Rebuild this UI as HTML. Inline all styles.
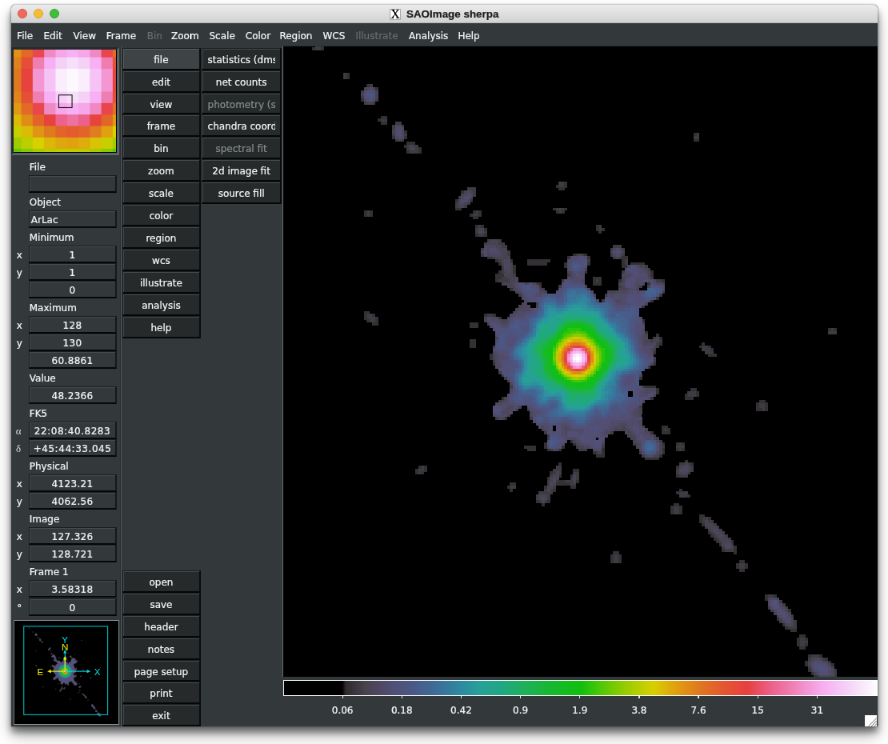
<!DOCTYPE html>
<html lang="en"><head><meta charset="utf-8"><title>SAOImage sherpa</title>
<style>
html,body{margin:0;padding:0;background:#fff;}
body{width:888px;height:744px;overflow:hidden;position:relative;}
#s{position:absolute;left:0;top:0;width:1110px;height:930px;transform:scale(0.8);transform-origin:0 0;will-change:transform;
 font-family:"DejaVu Sans","Liberation Sans",sans-serif;font-size:12px;color:#f4f4f4;-webkit-text-stroke:0.22px currentColor;}
#s div,#s span,#s svg{position:absolute;box-sizing:border-box;}
.win{background:#33393b;border-radius:5px 5px 0 0;box-shadow:0 7px 9px rgba(0,0,0,.45),0 11px 20px rgba(0,0,0,.33),0 0 2.5px rgba(0,0,0,.5);}
.tb{background:linear-gradient(#ececec,#d2d2d2);border-radius:5px 5px 0 0;border-bottom:1px solid #b4b4b4;}
.tl{border-radius:50%;width:12px;height:12px;}
.title{font-family:"Liberation Sans",sans-serif;font-weight:bold;font-size:13.4px;color:#1c1c1c;white-space:nowrap;line-height:16px;}
.xi{background:#fff;border:1px solid #a9a9a9;font-family:"Liberation Serif",serif;font-size:16px;line-height:12.5px;color:#000;text-align:center;overflow:hidden;}
.mi{white-space:nowrap;line-height:16px;}
.dis{color:#676d6f;}
.bt{background:#262a2b;border-top:1px solid #1b1e1f;border-left:1px solid #1b1e1f;border-bottom:2px solid #060707;border-right:2px solid #0b0c0d;box-shadow:inset 1px 1px 0 #454b4d;overflow:hidden;}
.bt.act{background:#3e4446;box-shadow:inset 1px 1px 0 #565d60;}
.bt span{left:0;right:0;top:0;bottom:0;text-align:center;white-space:nowrap;line-height:28.5px;}
.bt span.clip{left:6.2px;right:6.1px;text-align:left;overflow:hidden;}
.bt.d span{color:#858b8d;}
.en{background:#33393b;border-top:1px solid #1b1e1f;border-left:1px solid #1b1e1f;border-bottom:2px solid #070808;border-right:2px solid #15181a;box-shadow:inset 1px 1px 0 #474d4f;text-align:center;white-space:nowrap;line-height:23.5px;overflow:hidden;}
.lb{white-space:nowrap;line-height:16px;}
.cl{white-space:nowrap;line-height:14px;text-align:center;width:60px;}
</style></head>
<body><div id="s">
<div class="win" style="left:13.62px;top:5.5px;width:1083.38px;height:902.25px"></div>
<div class="tb" style="left:13.62px;top:5.5px;width:1083.38px;height:23.25px"></div>
<div class="tl" style="left:21.88px;top:10.88px;background:#ee6a5e;border:1px solid #d9564b"></div>
<div class="tl" style="left:42px;top:10.88px;background:#f5be32;border:1px solid #dca52b"></div>
<div class="tl" style="left:62px;top:10.88px;background:#3ebe3c;border:1px solid #32a532"></div>
<div class="xi" style="left:486.75px;top:10.5px;width:14.5px;height:14.25px">X</div>
<div class="title" style="left:508px;top:9.5px">SAOImage sherpa</div>
<div style="left:14.5px;top:28.75px;width:1082px;height:879px;background:#33393b"></div>
<div class="mi" style="left:21.12px;top:36.62px">File</div><div class="mi" style="left:54.5px;top:36.62px">Edit</div><div class="mi" style="left:91.5px;top:36.62px">View</div><div class="mi" style="left:132.75px;top:36.62px">Frame</div><div class="mi dis" style="left:183.75px;top:36.62px">Bin</div><div class="mi" style="left:214px;top:36.62px">Zoom</div><div class="mi" style="left:261.5px;top:36.62px">Scale</div><div class="mi" style="left:306.75px;top:36.62px">Color</div><div class="mi" style="left:349.38px;top:36.62px">Region</div><div class="mi" style="left:403.5px;top:36.62px">WCS</div><div class="mi dis" style="left:444.38px;top:36.62px">Illustrate</div><div class="mi" style="left:510.88px;top:36.62px">Analysis</div><div class="mi" style="left:572.38px;top:36.62px">Help</div>
<div style="left:14.06px;top:58.88px;width:134.56px;height:134.88px;background:#000;border:3.4px solid;border-color:#272b2d #5c6365 #5c6365 #272b2d"></div>
<svg style="left:17.44px;top:62.38px" width="127.88" height="127.87" viewBox="13.95 49.9 102.3 102.3"><rect x="13.95" y="49.9" width="8.25" height="8.3" fill="#e09116"/><rect x="21.6" y="49.9" width="12.03" height="8.3" fill="#e26729"/><rect x="33.03" y="49.9" width="12.03" height="8.3" fill="#e9464d"/><rect x="44.46" y="49.9" width="12.03" height="8.3" fill="#f08ac2"/><rect x="55.89" y="49.9" width="12.03" height="8.3" fill="#f6a7e9"/><rect x="67.32" y="49.9" width="12.03" height="8.3" fill="#f8b0f4"/><rect x="78.75" y="49.9" width="12.03" height="8.3" fill="#f6a7e9"/><rect x="90.18" y="49.9" width="12.03" height="8.3" fill="#f089c2"/><rect x="101.61" y="49.9" width="12.03" height="8.3" fill="#e9454c"/><rect x="113.04" y="49.9" width="3.81" height="8.3" fill="#e26c26"/><rect x="13.95" y="57.6" width="8.25" height="12.05" fill="#e0811d"/><rect x="21.6" y="57.6" width="12.03" height="12.05" fill="#e54f36"/><rect x="33.03" y="57.6" width="12.03" height="12.05" fill="#ef7eb2"/><rect x="44.46" y="57.6" width="12.03" height="12.05" fill="#f8b0f4"/><rect x="55.89" y="57.6" width="12.03" height="12.05" fill="#f5d0f7"/><rect x="67.32" y="57.6" width="12.03" height="12.05" fill="#f6e0f9"/><rect x="78.75" y="57.6" width="12.03" height="12.05" fill="#f5d0f7"/><rect x="90.18" y="57.6" width="12.03" height="12.05" fill="#f8b0f4"/><rect x="101.61" y="57.6" width="12.03" height="12.05" fill="#ef7db1"/><rect x="113.04" y="57.6" width="3.81" height="12.05" fill="#e54f36"/><rect x="13.95" y="69.05" width="8.25" height="12.05" fill="#e07820"/><rect x="21.6" y="69.05" width="12.03" height="12.05" fill="#e7433e"/><rect x="33.03" y="69.05" width="12.03" height="12.05" fill="#f397d3"/><rect x="44.46" y="69.05" width="12.03" height="12.05" fill="#f6c3f6"/><rect x="55.89" y="69.05" width="12.03" height="12.05" fill="#faeefc"/><rect x="67.32" y="69.05" width="12.03" height="12.05" fill="#fdf8fe"/><rect x="78.75" y="69.05" width="12.03" height="12.05" fill="#faedfc"/><rect x="90.18" y="69.05" width="12.03" height="12.05" fill="#f6c3f6"/><rect x="101.61" y="69.05" width="12.03" height="12.05" fill="#f396d2"/><rect x="113.04" y="69.05" width="3.81" height="12.05" fill="#e7443e"/><rect x="13.95" y="80.5" width="8.25" height="12.05" fill="#e07920"/><rect x="21.6" y="80.5" width="12.03" height="12.05" fill="#e7433e"/><rect x="33.03" y="80.5" width="12.03" height="12.05" fill="#f397d3"/><rect x="44.46" y="80.5" width="12.03" height="12.05" fill="#f6c3f6"/><rect x="55.89" y="80.5" width="12.03" height="12.05" fill="#faeefc"/><rect x="67.32" y="80.5" width="12.03" height="12.05" fill="#fdf8fe"/><rect x="78.75" y="80.5" width="12.03" height="12.05" fill="#faedfc"/><rect x="90.18" y="80.5" width="12.03" height="12.05" fill="#f6c3f6"/><rect x="101.61" y="80.5" width="12.03" height="12.05" fill="#f396d2"/><rect x="113.04" y="80.5" width="3.81" height="12.05" fill="#e7443e"/><rect x="13.95" y="91.95" width="8.25" height="12.05" fill="#e0841b"/><rect x="21.6" y="91.95" width="12.03" height="12.05" fill="#e54f36"/><rect x="33.03" y="91.95" width="12.03" height="12.05" fill="#ef7eb2"/><rect x="44.46" y="91.95" width="12.03" height="12.05" fill="#f8b0f4"/><rect x="55.89" y="91.95" width="12.03" height="12.05" fill="#f5d0f7"/><rect x="67.32" y="91.95" width="12.03" height="12.05" fill="#f6e0f9"/><rect x="78.75" y="91.95" width="12.03" height="12.05" fill="#f5d0f7"/><rect x="90.18" y="91.95" width="12.03" height="12.05" fill="#f8b0f4"/><rect x="101.61" y="91.95" width="12.03" height="12.05" fill="#ef7db1"/><rect x="113.04" y="91.95" width="3.81" height="12.05" fill="#e54f36"/><rect x="13.95" y="103.4" width="8.25" height="12.05" fill="#e09913"/><rect x="21.6" y="103.4" width="12.03" height="12.05" fill="#e26928"/><rect x="33.03" y="103.4" width="12.03" height="12.05" fill="#e9464d"/><rect x="44.46" y="103.4" width="12.03" height="12.05" fill="#f08ac2"/><rect x="55.89" y="103.4" width="12.03" height="12.05" fill="#f6a7e9"/><rect x="67.32" y="103.4" width="12.03" height="12.05" fill="#f8b0f4"/><rect x="78.75" y="103.4" width="12.03" height="12.05" fill="#f6a7e9"/><rect x="90.18" y="103.4" width="12.03" height="12.05" fill="#f089c2"/><rect x="101.61" y="103.4" width="12.03" height="12.05" fill="#e9454c"/><rect x="113.04" y="103.4" width="3.81" height="12.05" fill="#e16e25"/><rect x="13.95" y="114.85" width="8.25" height="12.05" fill="#dcba07"/><rect x="21.6" y="114.85" width="12.03" height="12.05" fill="#e08d17"/><rect x="33.03" y="114.85" width="12.03" height="12.05" fill="#e3632b"/><rect x="44.46" y="114.85" width="12.03" height="12.05" fill="#e7433e"/><rect x="55.89" y="114.85" width="12.03" height="12.05" fill="#ec628a"/><rect x="67.32" y="114.85" width="12.03" height="12.05" fill="#ee72a1"/><rect x="78.75" y="114.85" width="12.03" height="12.05" fill="#ec618a"/><rect x="90.18" y="114.85" width="12.03" height="12.05" fill="#e7443e"/><rect x="101.61" y="114.85" width="12.03" height="12.05" fill="#e2652a"/><rect x="113.04" y="114.85" width="3.81" height="12.05" fill="#e09a12"/><rect x="13.95" y="126.3" width="8.25" height="12.05" fill="#c7cf00"/><rect x="21.6" y="126.3" width="12.03" height="12.05" fill="#dcbb07"/><rect x="33.03" y="126.3" width="12.03" height="12.05" fill="#e09614"/><rect x="44.46" y="126.3" width="12.03" height="12.05" fill="#e07a1f"/><rect x="55.89" y="126.3" width="12.03" height="12.05" fill="#e3642a"/><rect x="67.32" y="126.3" width="12.03" height="12.05" fill="#e45b2e"/><rect x="78.75" y="126.3" width="12.03" height="12.05" fill="#e2642a"/><rect x="90.18" y="126.3" width="12.03" height="12.05" fill="#e07d1e"/><rect x="101.61" y="126.3" width="12.03" height="12.05" fill="#e0a010"/><rect x="113.04" y="126.3" width="3.81" height="12.05" fill="#d6d000"/><rect x="13.95" y="137.75" width="8.25" height="12.05" fill="#9ecc00"/><rect x="21.6" y="137.75" width="12.03" height="12.05" fill="#bdce00"/><rect x="33.03" y="137.75" width="12.03" height="12.05" fill="#d8d000"/><rect x="44.46" y="137.75" width="12.03" height="12.05" fill="#dcb708"/><rect x="55.89" y="137.75" width="12.03" height="12.05" fill="#dfa70e"/><rect x="67.32" y="137.75" width="12.03" height="12.05" fill="#e0a30f"/><rect x="78.75" y="137.75" width="12.03" height="12.05" fill="#deac0c"/><rect x="90.18" y="137.75" width="12.03" height="12.05" fill="#dac205"/><rect x="101.61" y="137.75" width="12.03" height="12.05" fill="#c7cf00"/><rect x="113.04" y="137.75" width="3.81" height="12.05" fill="#a3cd00"/><rect x="13.95" y="149.2" width="8.25" height="3.6" fill="#5fc906"/><rect x="21.6" y="149.2" width="12.03" height="3.6" fill="#87cb02"/><rect x="33.03" y="149.2" width="12.03" height="3.6" fill="#a3cd00"/><rect x="44.46" y="149.2" width="12.03" height="3.6" fill="#b4ce00"/><rect x="55.89" y="149.2" width="12.03" height="3.6" fill="#bece00"/><rect x="67.32" y="149.2" width="12.03" height="3.6" fill="#bfce00"/><rect x="78.75" y="149.2" width="12.03" height="3.6" fill="#b8ce00"/><rect x="90.18" y="149.2" width="12.03" height="3.6" fill="#a7cd00"/><rect x="101.61" y="149.2" width="12.03" height="3.6" fill="#89cb02"/><rect x="113.04" y="149.2" width="3.81" height="3.6" fill="#5bc907"/><rect x="59.1" y="95.3" width="13.3" height="12.6" fill="none" stroke="#1c1c1c" stroke-width="0.9"/></svg>
<div class="lb" style="left:36.75px;top:201.19px">File</div>
<div class="en" style="left:35.75px;top:219.2px;width:110.62px;height:22.01px;letter-spacing:0.35px;"></div>
<div class="lb" style="left:36.75px;top:245.21px">Object</div>
<div class="en" style="left:35.75px;top:263.22px;width:110.62px;height:22.01px;text-align:left;padding-left:2px;">ArLac</div>
<div class="lb" style="left:36.75px;top:289.24px">Minimum</div>
<div class="lb" style="left:15.62px;top:311.25px;width:17.5px;text-align:center;">x</div>
<div class="en" style="left:35.75px;top:307.25px;width:110.62px;height:22.01px;letter-spacing:0.35px;">1</div>
<div class="lb" style="left:15.62px;top:333.26px;width:17.5px;text-align:center;">y</div>
<div class="en" style="left:35.75px;top:329.26px;width:110.62px;height:22.01px;letter-spacing:0.35px;">1</div>
<div class="en" style="left:35.75px;top:351.27px;width:110.62px;height:22.01px;letter-spacing:0.35px;">0</div>
<div class="lb" style="left:36.75px;top:377.29px">Maximum</div>
<div class="lb" style="left:15.62px;top:399.3px;width:17.5px;text-align:center;">x</div>
<div class="en" style="left:35.75px;top:395.3px;width:110.62px;height:22.01px;letter-spacing:0.35px;">128</div>
<div class="lb" style="left:15.62px;top:421.31px;width:17.5px;text-align:center;">y</div>
<div class="en" style="left:35.75px;top:417.31px;width:110.62px;height:22.01px;letter-spacing:0.35px;">130</div>
<div class="en" style="left:35.75px;top:439.32px;width:110.62px;height:22.01px;letter-spacing:0.35px;">60.8861</div>
<div class="lb" style="left:36.75px;top:465.34px">Value</div>
<div class="en" style="left:35.75px;top:483.35px;width:110.62px;height:22.01px;letter-spacing:0.35px;">48.2366</div>
<div class="lb" style="left:36.75px;top:509.36px">FK5</div>
<div class="lb" style="left:15.62px;top:531.38px;width:17.5px;text-align:center;font-family:'Liberation Serif',serif;font-size:13px;color:#dcdcdc;-webkit-text-stroke:0;margin-left:-1.2px;">α</div>
<div class="en" style="left:35.75px;top:527.38px;width:110.62px;height:22.01px;letter-spacing:0.55px;">22:08:40.8283</div>
<div class="lb" style="left:15.62px;top:553.39px;width:17.5px;text-align:center;font-family:'Liberation Serif',serif;font-size:13px;color:#dcdcdc;-webkit-text-stroke:0;margin-left:-1.2px;">δ</div>
<div class="en" style="left:35.75px;top:549.39px;width:110.62px;height:22.01px;letter-spacing:0.55px;">+45:44:33.045</div>
<div class="lb" style="left:36.75px;top:575.4px">Physical</div>
<div class="lb" style="left:15.62px;top:597.41px;width:17.5px;text-align:center;">x</div>
<div class="en" style="left:35.75px;top:593.41px;width:110.62px;height:22.01px;letter-spacing:0.35px;">4123.21</div>
<div class="lb" style="left:15.62px;top:619.42px;width:17.5px;text-align:center;">y</div>
<div class="en" style="left:35.75px;top:615.42px;width:110.62px;height:22.01px;letter-spacing:0.35px;">4062.56</div>
<div class="lb" style="left:36.75px;top:641.44px">Image</div>
<div class="lb" style="left:15.62px;top:663.45px;width:17.5px;text-align:center;">x</div>
<div class="en" style="left:35.75px;top:659.45px;width:110.62px;height:22.01px;letter-spacing:0.35px;">127.326</div>
<div class="lb" style="left:15.62px;top:685.46px;width:17.5px;text-align:center;">y</div>
<div class="en" style="left:35.75px;top:681.46px;width:110.62px;height:22.01px;letter-spacing:0.35px;">128.721</div>
<div class="lb" style="left:36.75px;top:707.48px">Frame 1</div>
<div class="lb" style="left:15.62px;top:729.49px;width:17.5px;text-align:center;">x</div>
<div class="en" style="left:35.75px;top:725.49px;width:110.62px;height:22.01px;letter-spacing:0.35px;">3.58318</div>
<div class="lb" style="left:15.62px;top:751.5px;width:17.5px;text-align:center;">°</div>
<div class="en" style="left:35.75px;top:747.5px;width:110.62px;height:22.01px;letter-spacing:0.35px;">0</div>
<div style="left:17.12px;top:775px;width:131.5px;height:131.12px;background:#000;border:1.5px solid;border-color:#8b9193 #7b8284 #90979a #6d7476"></div>
<svg style="left:18.62px;top:777px" width="128.12" height="127.25" viewBox="14.9 621.6 102.5 101.8"><defs><radialGradient id="pg"><stop offset="0" stop-color="#fff"/><stop offset=".12" stop-color="#f088c0"/><stop offset=".2" stop-color="#e84040"/><stop offset=".3" stop-color="#d8d000"/><stop offset=".48" stop-color="#10c010"/><stop offset=".7" stop-color="#28a09a"/><stop offset="1" stop-color="#4a5a8a"/></radialGradient></defs><polygon points="64.67,656.82 66.02,656.82 66.47,657.16 66.36,657.94 65.91,658.85 65.68,659.97 65.46,660.98 66.25,661.55 67.04,662.11 67.37,663.23 68.5,663.46 68.72,662.22 69.17,661.77 70.41,662 70.7,660.53 71.15,658.96 72.1,658.17 74.13,658.17 75.03,658.85 75.14,659.86 74.69,660.6 75.36,660.31 76.38,660.2 77.05,661.1 76.94,662 75.93,662.9 74.58,663.57 73.34,664.47 73.11,665.03 73.79,665.71 74.13,667.17 74.4,668.52 75.21,668.97 75.7,667.85 76.38,668.07 76.49,669.2 75.75,670.1 75.25,670.77 75.36,671.31 75.7,671.31 75.48,672.21 74.35,672.66 73.56,673.56 73.34,674.46 73.22,675.14 74.13,675.37 75.48,675.25 76.15,675.48 76.04,676.38 75.03,676.94 73.9,677.39 73.45,677.84 73.56,678.97 73.67,680.32 74.13,680.99 75.25,681.89 76.38,682.79 76.83,683.69 76.6,684.82 75.7,685.38 74.58,685.49 73.67,684.82 73,683.69 72.32,682.79 71.65,681.89 70.97,681.44 70.07,681.44 69.17,681.89 68.5,682.57 68.27,683.92 68.39,685.04 67.82,685.61 67.26,685.04 67.04,683.92 66.25,683.92 65.35,684.37 64.67,683.92 64.67,683.58 63.68,682.57 63.01,683.02 62.56,683.92 61.66,684.37 60.64,684.14 60.19,683.58 60.42,682.79 60.98,682.34 60.53,681.89 59.63,681.22 58.84,680.54 58.28,679.64 57.94,678.52 57.72,677.73 56.93,677.84 56.25,678.52 55.13,679.3 54.23,679.98 53.44,679.98 52.99,679.19 52.99,678.29 53.55,677.39 54.68,676.72 55.35,675.93 55.69,675.03 54.9,674.35 54,673.56 53.33,672.44 52.65,671.31 52.65,671.31 52.99,670.1 53.55,668.52 53.22,667.62 52.43,666.72 51.53,666.05 51.42,665.37 52.09,665.03 53.1,665.26 54.12,665.93 55.13,665.71 55.69,664.81 56.59,664.13 57.38,663.46 56.93,662.78 56.03,662 54.9,661.32 54,660.87 53.1,660.31 52.99,659.86 53.67,659.41 54.23,659.3 54.34,658.62 53.89,657.94 53.1,657.38 51.98,657.27 51.3,657.16 50.97,656.71 51.53,655.92 52.09,654.91 52.77,654.57 53.89,654.68 54.57,655.47 55.13,656.48 55.47,657.49 55.8,658.39 55.92,659.41 56.59,660.53 57.6,660.98 58.51,660.53 59.52,660.76 59.97,661.77 60.53,662.33 61.66,662.22 62.33,661.32 62.56,660.42 63.46,660.2 63.68,659.41 63.12,658.85 63.05,657.94 63.46,657.16 64.67,656.82" fill="#55527a" stroke="#3c3a48" stroke-width=".6"/><circle cx="64.7" cy="671.3" r="7.4" fill="url(#pg)"/><ellipse cx="28.6" cy="627.99" rx="0.7" ry="0.55" fill="#3e3a42" transform="rotate(0 28.6 627.99)"/><ellipse cx="32.37" cy="631.92" rx="0.55" ry="0.55" fill="#3e3a42" transform="rotate(45 32.37 631.92)"/><ellipse cx="35.76" cy="634.61" rx="1.19" ry="1.36" fill="#4d5580" transform="rotate(0 35.76 634.61)"/><ellipse cx="37.64" cy="638.14" rx="0.55" ry="0.55" fill="#3e3a42" transform="rotate(0 37.64 638.14)"/><ellipse cx="39.82" cy="639.78" rx="1.4" ry="0.87" fill="#514d72" transform="rotate(80 39.82 639.78)"/><ellipse cx="41.79" cy="642.01" rx="1.12" ry="0.7" fill="#46414b" transform="rotate(20 41.79 642.01)"/><ellipse cx="49.1" cy="648.99" rx="1.95" ry="0.84" fill="#4e4a65" transform="rotate(-50 49.1 648.99)"/><ellipse cx="35.51" cy="651.08" rx="0.55" ry="0.55" fill="#3e3a42" transform="rotate(0 35.51 651.08)"/><ellipse cx="50.52" cy="651.22" rx="0.55" ry="0.56" fill="#3e3a42" transform="rotate(60 50.52 651.22)"/><ellipse cx="51.22" cy="653.59" rx="0.84" ry="0.77" fill="#4a4554" transform="rotate(45 51.22 653.59)"/><ellipse cx="62.54" cy="647.17" rx="0.55" ry="0.55" fill="#3e3a42" transform="rotate(0 62.54 647.17)"/><ellipse cx="62.3" cy="650.66" rx="0.63" ry="0.55" fill="#3e3a42" transform="rotate(0 62.3 650.66)"/><ellipse cx="81.31" cy="640.41" rx="0.55" ry="0.55" fill="#3e3a42" transform="rotate(0 81.31 640.41)"/><ellipse cx="67.88" cy="653.23" rx="0.55" ry="0.55" fill="#3e3a42" transform="rotate(0 67.88 653.23)"/><ellipse cx="70.3" cy="656.55" rx="1.01" ry="1.01" fill="#504c6e" transform="rotate(0 70.3 656.55)"/><ellipse cx="71.37" cy="657.92" rx="0.55" ry="0.56" fill="#3b373e" transform="rotate(0 71.37 657.92)"/><ellipse cx="35.9" cy="665.73" rx="1.19" ry="0.56" fill="#3e3a42" transform="rotate(35 35.9 665.73)"/><ellipse cx="50.3" cy="666.71" rx="0.55" ry="0.55" fill="#353237" transform="rotate(-35 50.3 666.71)"/><ellipse cx="50.16" cy="669.3" rx="0.55" ry="0.55" fill="#353237" transform="rotate(0 50.16 669.3)"/><ellipse cx="82.85" cy="670.2" rx="1.26" ry="0.55" fill="#3e3a42" transform="rotate(40 82.85 670.2)"/><ellipse cx="80.65" cy="676.38" rx="1.01" ry="0.56" fill="#3e3a42" transform="rotate(-25 80.65 676.38)"/><ellipse cx="100.3" cy="667.62" rx="0.55" ry="0.55" fill="#3e3a42" transform="rotate(0 100.3 667.62)"/><ellipse cx="90.54" cy="678.01" rx="0.77" ry="0.77" fill="#3e3a42" transform="rotate(0 90.54 678.01)"/><ellipse cx="77.09" cy="681.4" rx="0.56" ry="0.55" fill="#373439" transform="rotate(45 77.09 681.4)"/><ellipse cx="79.11" cy="683.65" rx="0.55" ry="0.56" fill="#3e3a42" transform="rotate(0 79.11 683.65)"/><ellipse cx="42.88" cy="686.89" rx="0.63" ry="0.55" fill="#3e3a42" transform="rotate(-30 42.88 686.89)"/><ellipse cx="55.56" cy="689.25" rx="0.55" ry="0.55" fill="#3e3a42" transform="rotate(0 55.56 689.25)"/><ellipse cx="59.89" cy="690.77" rx="0.94" ry="0.91" fill="#4a4554" transform="rotate(0 59.89 690.77)"/><ellipse cx="61.32" cy="688.48" rx="2.65" ry="0.66" fill="#4a4554" transform="rotate(-66 61.32 688.48)"/><ellipse cx="63.14" cy="688.62" rx="0.91" ry="0.55" fill="#3b373e" transform="rotate(-10 63.14 688.62)"/><ellipse cx="64.32" cy="688.06" rx="1.53" ry="0.55" fill="#46414b" transform="rotate(-75 64.32 688.06)"/><ellipse cx="79.65" cy="686.85" rx="1.33" ry="0.98" fill="#4c475d" transform="rotate(-35 79.65 686.85)"/><ellipse cx="79.51" cy="690.29" rx="0.91" ry="0.55" fill="#3e3a42" transform="rotate(20 79.51 690.29)"/><ellipse cx="78.51" cy="692.41" rx="0.66" ry="0.66" fill="#3e3a42" transform="rotate(0 78.51 692.41)"/><ellipse cx="84.28" cy="695.73" rx="3.77" ry="0.77" fill="#4a4554" transform="rotate(45 84.28 695.73)"/><ellipse cx="85.67" cy="697.41" rx="1.12" ry="0.84" fill="#4b4658" transform="rotate(45 85.67 697.41)"/><ellipse cx="87.77" cy="700.24" rx="0.56" ry="0.55" fill="#3e3a42" transform="rotate(0 87.77 700.24)"/><ellipse cx="70.09" cy="699.19" rx="0.66" ry="0.66" fill="#3e3a42" transform="rotate(0 70.09 699.19)"/><ellipse cx="93.21" cy="706.76" rx="3.21" ry="0.98" fill="#514d72" transform="rotate(52 93.21 706.76)"/><ellipse cx="92.23" cy="705.57" rx="1.12" ry="0.98" fill="#50527a" transform="rotate(52 92.23 705.57)"/><ellipse cx="96.15" cy="710.85" rx="0.66" ry="0.66" fill="#3e3a42" transform="rotate(0 96.15 710.85)"/><ellipse cx="98.79" cy="714.57" rx="2.37" ry="1.4" fill="#515078" transform="rotate(35 98.79 714.57)"/><ellipse cx="59.16" cy="657.85" rx="1.67" ry="0.55" fill="#353237" transform="rotate(0 59.16 657.85)"/><ellipse cx="67.55" cy="660.53" rx="0.55" ry="0.55" fill="#3b373e" transform="rotate(0 67.55 660.53)"/><ellipse cx="58.17" cy="683.8" rx="0.7" ry="0.55" fill="#333034" transform="rotate(0 58.17 683.8)"/><circle cx="36.18" cy="634.96" r="0.8" fill="#4c4a60"/><circle cx="38.04" cy="637.33" r="0.6" fill="#4c4a60"/><circle cx="39.9" cy="639.7" r="0.7" fill="#4c4a60"/><circle cx="41.45" cy="641.67" r="0.6" fill="#4c4a60"/><circle cx="91.98" cy="706.06" r="0.9" fill="#4c4a60"/><circle cx="93.84" cy="708.43" r="0.7" fill="#4c4a60"/><circle cx="96.01" cy="711.19" r="1.1" fill="#4c4a60"/><circle cx="97.56" cy="713.17" r="0.8" fill="#4c4a60"/><rect x="23.5" y="626.3" width="83.9" height="88.4" fill="none" stroke="#00b9b9" stroke-width=".9"/><g stroke-width=".85" fill="none"><path d="M64.7 671.3V651" stroke="#00e0e0"/><path d="M64.7 671.3H88.6" stroke="#00e0e0"/><path d="M64.7 671.3V657.6" stroke="#f0f000"/><path d="M64.7 671.3H48.5" stroke="#f0f000"/></g><path d="M64.7 649.6l-1.7 3.6h3.4z" fill="#00e0e0"/><path d="M90.2 671.3l-3.6-1.7v3.4z" fill="#00e0e0"/><path d="M64.7 656l-1.7 3.8h3.4z" fill="#f0f000"/><path d="M47 671.3l3.8-1.7v3.4z" fill="#f0f000"/><text x="64.7" y="643.2" fill="#00e0e0" font-family="Liberation Sans,sans-serif" font-size="9.3" text-anchor="middle">Y</text><text x="64.7" y="650.6" fill="#f0f000" font-family="Liberation Sans,sans-serif" font-size="9.3" text-anchor="middle">N</text><text x="40" y="675.2" fill="#f0f000" font-family="Liberation Sans,sans-serif" font-size="9.3" text-anchor="middle">E</text><text x="97" y="675.2" fill="#00e0e0" font-family="Liberation Sans,sans-serif" font-size="9.3" text-anchor="middle">X</text></svg>
<div style="left:149.88px;top:58.12px;width:1px;height:849.62px;background:#292d2f"></div>
<div style="left:151px;top:58.12px;width:1px;height:849.62px;background:#50575a"></div>
<div class="bt act" style="left:152.88px;top:59.75px;width:98.13px;height:27.91px"><span>file</span></div>
<div class="bt" style="left:152.88px;top:87.66px;width:98.13px;height:27.91px"><span>edit</span></div>
<div class="bt" style="left:152.88px;top:115.57px;width:98.13px;height:27.91px"><span>view</span></div>
<div class="bt" style="left:152.88px;top:143.49px;width:98.13px;height:27.91px"><span>frame</span></div>
<div class="bt" style="left:152.88px;top:171.4px;width:98.13px;height:27.91px"><span>bin</span></div>
<div class="bt" style="left:152.88px;top:199.31px;width:98.13px;height:27.91px"><span>zoom</span></div>
<div class="bt" style="left:152.88px;top:227.22px;width:98.13px;height:27.91px"><span>scale</span></div>
<div class="bt" style="left:152.88px;top:255.14px;width:98.13px;height:27.91px"><span>color</span></div>
<div class="bt" style="left:152.88px;top:283.05px;width:98.13px;height:27.91px"><span>region</span></div>
<div class="bt" style="left:152.88px;top:310.96px;width:98.13px;height:27.91px"><span>wcs</span></div>
<div class="bt" style="left:152.88px;top:338.87px;width:98.13px;height:27.91px"><span>illustrate</span></div>
<div class="bt" style="left:152.88px;top:366.79px;width:98.13px;height:27.91px"><span>analysis</span></div>
<div class="bt" style="left:152.88px;top:394.7px;width:98.13px;height:27.91px"><span>help</span></div>
<div class="bt" style="left:252.38px;top:59.75px;width:99.5px;height:27.91px"><span class="clip">statistics (dmstat)</span></div>
<div class="bt" style="left:252.38px;top:87.66px;width:99.5px;height:27.91px"><span>net counts</span></div>
<div class="bt d" style="left:252.38px;top:115.57px;width:99.5px;height:27.91px"><span class="clip">photometry (srcflux)</span></div>
<div class="bt" style="left:252.38px;top:143.49px;width:99.5px;height:27.91px"><span class="clip">chandra coordinates</span></div>
<div class="bt d" style="left:252.38px;top:171.4px;width:99.5px;height:27.91px"><span>spectral fit</span></div>
<div class="bt" style="left:252.38px;top:199.31px;width:99.5px;height:27.91px"><span>2d image fit</span></div>
<div class="bt" style="left:252.38px;top:227.22px;width:99.5px;height:27.91px"><span>source fill</span></div>
<div class="bt" style="left:152.88px;top:712.88px;width:98.13px;height:27.91px"><span>open</span></div>
<div class="bt" style="left:152.88px;top:740.79px;width:98.13px;height:27.91px"><span>save</span></div>
<div class="bt" style="left:152.88px;top:768.7px;width:98.13px;height:27.91px"><span>header</span></div>
<div class="bt" style="left:152.88px;top:796.61px;width:98.13px;height:27.91px"><span>notes</span></div>
<div class="bt" style="left:152.88px;top:824.52px;width:98.13px;height:27.91px"><span>page setup</span></div>
<div class="bt" style="left:152.88px;top:852.44px;width:98.13px;height:27.91px"><span>print</span></div>
<div class="bt" style="left:152.88px;top:880.35px;width:98.13px;height:27.91px"><span>exit</span></div>
<div style="left:353px;top:57px;width:743.5px;height:788.75px;background:#000;border-left:1px solid #666d6f;border-top:1px solid #2b3032"></div>
<svg style="left:354px;top:57.75px" width="742.5" height="788" viewBox="283.2 46.2 594 630.4" shape-rendering="crispEdges"><path fill="#3f3b42" d="M314.92 46.2h6.03v0.98h-6.03zM314.92 46.88h6.03v3.17h-6.03zM343.58 72.68h3.17v3.17h-3.17zM343.58 75.55h3.17v3.17h-3.17zM369.38 84.15h3.17v3.17h-3.17zM360.78 89.88h3.17v3.17h-3.17zM360.78 95.62h3.17v3.17h-3.17zM375.11 98.48h3.17v3.17h-3.17zM363.65 101.35h3.17v3.17h-3.17zM372.25 101.35h3.17v3.17h-3.17zM380.84 118.55h6.03v3.17h-6.03zM395.18 121.41h6.03v3.17h-6.03zM392.31 124.28h3.17v3.17h-3.17zM400.91 124.28h3.17v3.17h-3.17zM392.31 127.15h3.17v3.17h-3.17zM392.31 132.88h3.17v3.17h-3.17zM403.78 132.88h3.17v3.17h-3.17zM696.16 132.88h3.17v3.17h-3.17zM693.29 135.75h6.03v3.17h-6.03zM395.18 138.61h3.17v3.17h-3.17zM400.91 138.61h3.17v3.17h-3.17zM406.64 144.35h3.17v3.17h-3.17zM412.38 144.35h6.03v3.17h-6.03zM406.64 147.21h3.17v3.17h-3.17zM415.24 147.21h3.17v3.17h-3.17zM409.51 150.08h8.9v3.17h-8.9zM558.57 181.61h6.03v3.17h-6.03zM558.57 184.48h6.03v3.17h-6.03zM466.84 187.34h8.9v3.17h-8.9zM472.57 190.21h3.17v3.17h-3.17zM472.57 193.08h3.17v3.17h-3.17zM458.24 195.94h3.17v3.17h-3.17zM455.37 201.68h3.17v3.17h-3.17zM466.84 201.68h3.17v3.17h-3.17zM455.37 204.54h3.17v3.17h-3.17zM463.97 204.54h3.17v3.17h-3.17zM555.7 207.41h8.9v3.17h-8.9zM366.51 210.28h3.17v3.17h-3.17zM475.44 210.28h3.17v3.17h-3.17zM558.57 210.28h3.17v3.17h-3.17zM366.51 213.14h3.17v3.17h-3.17zM472.57 213.14h6.03v3.17h-6.03zM478.31 224.61h3.17v3.17h-3.17zM598.7 224.61h3.17v3.17h-3.17zM475.44 227.47h3.17v3.17h-3.17zM598.7 227.47h3.17v3.17h-3.17zM475.44 230.34h3.17v3.17h-3.17zM484.04 230.34h3.17v3.17h-3.17zM478.31 233.21h6.03v3.17h-6.03zM486.91 238.94h3.17v3.17h-3.17zM498.37 238.94h3.17v3.17h-3.17zM484.04 241.81h3.17v3.17h-3.17zM498.37 241.81h6.03v3.17h-6.03zM501.24 244.67h6.03v3.17h-6.03zM613.03 244.67h8.9v3.17h-8.9zM481.17 247.54h3.17v3.17h-3.17zM610.16 247.54h3.17v3.17h-3.17zM621.63 247.54h3.17v3.17h-3.17zM506.97 250.41h3.17v3.17h-3.17zM481.17 253.27h3.17v3.17h-3.17zM506.97 253.27h3.17v3.17h-3.17zM575.77 253.27h3.17v3.17h-3.17zM581.5 253.27h3.17v3.17h-3.17zM610.16 253.27h3.17v3.17h-3.17zM621.63 253.27h3.17v3.17h-3.17zM492.64 256.14h3.17v3.17h-3.17zM613.03 256.14h3.17v3.17h-3.17zM618.76 256.14h3.17v3.17h-3.17zM498.37 259.01h3.17v3.17h-3.17zM587.23 259.01h3.17v3.17h-3.17zM624.5 259.01h3.17v3.17h-3.17zM624.5 261.87h3.17v3.17h-3.17zM501.24 264.74h3.17v3.17h-3.17zM644.56 264.74h3.17v3.17h-3.17zM501.24 267.61h3.17v3.17h-3.17zM647.43 267.61h3.17v3.17h-3.17zM501.24 270.47h3.17v3.17h-3.17zM621.63 270.47h3.17v3.17h-3.17zM512.7 273.34h3.17v3.17h-3.17zM567.17 273.34h3.17v3.17h-3.17zM501.24 276.2h6.03v3.17h-6.03zM650.3 276.2h3.17v3.17h-3.17zM498.37 279.07h11.77v3.17h-11.77zM561.43 279.07h3.17v3.17h-3.17zM595.83 279.07h3.17v3.17h-3.17zM656.03 279.07h6.03v3.17h-6.03zM535.64 281.94h3.17v3.17h-3.17zM538.5 284.8h3.17v3.17h-3.17zM558.57 284.8h3.17v3.17h-3.17zM618.76 284.8h3.17v3.17h-3.17zM638.83 284.8h3.17v3.17h-3.17zM541.37 287.67h3.17v3.17h-3.17zM661.76 290.54h3.17v3.17h-3.17zM518.44 293.4h3.17v3.17h-3.17zM604.43 293.4h3.17v3.17h-3.17zM658.9 293.4h3.17v3.17h-3.17zM601.57 299.14h3.17v3.17h-3.17zM535.64 302h3.17v3.17h-3.17zM366.51 313.47h6.03v3.17h-6.03zM486.91 313.47h6.03v3.17h-6.03zM366.51 316.34h8.9v3.17h-8.9zM369.38 319.2h6.03v3.17h-6.03zM830.89 327.8h3.17v3.17h-3.17zM828.02 330.67h8.9v3.17h-8.9zM653.16 336.4h3.17v3.17h-3.17zM650.3 339.27h3.17v3.17h-3.17zM658.9 339.27h3.17v3.17h-3.17zM656.03 342.13h3.17v3.17h-3.17zM492.64 345h3.17v3.17h-3.17zM656.03 345h3.17v3.17h-3.17zM701.89 345h6.03v3.17h-6.03zM653.16 347.87h3.17v3.17h-3.17zM701.89 347.87h8.9v3.17h-8.9zM704.76 350.73h8.9v3.17h-8.9zM653.16 356.47h3.17v3.17h-3.17zM492.64 359.33h3.17v3.17h-3.17zM653.16 359.33h3.17v3.17h-3.17zM647.43 365.07h3.17v3.17h-3.17zM498.37 370.8h3.17v3.17h-3.17zM504.1 376.53h3.17v3.17h-3.17zM506.97 379.4h3.17v3.17h-3.17zM509.84 385.13h3.17v3.17h-3.17zM641.7 385.13h3.17v3.17h-3.17zM687.56 390.86h8.9v3.17h-8.9zM687.56 393.73h8.9v3.17h-8.9zM498.37 399.46h3.17v3.17h-3.17zM759.22 402.33h6.03v3.17h-6.03zM638.83 405.2h3.17v3.17h-3.17zM759.22 405.2h6.03v3.17h-6.03zM515.57 408.06h3.17v3.17h-3.17zM527.04 408.06h3.17v3.17h-3.17zM762.09 408.06h3.17v3.17h-3.17zM495.5 416.66h3.17v3.17h-3.17zM529.9 416.66h3.17v3.17h-3.17zM664.63 428.13h3.17v3.17h-3.17zM544.24 431h3.17v3.17h-3.17zM610.16 431h3.17v3.17h-3.17zM547.1 433.86h3.17v3.17h-3.17zM653.16 433.86h3.17v3.17h-3.17zM547.1 436.73h3.17v3.17h-3.17zM656.03 436.73h3.17v3.17h-3.17zM658.9 439.6h3.17v3.17h-3.17zM633.1 442.46h3.17v3.17h-3.17zM678.96 442.46h3.17v3.17h-3.17zM575.77 445.33h3.17v3.17h-3.17zM601.57 445.33h3.17v3.17h-3.17zM661.76 445.33h3.17v3.17h-3.17zM676.09 445.33h8.9v3.17h-8.9zM549.97 448.19h3.17v3.17h-3.17zM578.63 448.19h8.9v3.17h-8.9zM678.96 448.19h3.17v3.17h-3.17zM595.83 451.06h3.17v3.17h-3.17zM638.83 451.06h3.17v3.17h-3.17zM641.7 453.93h3.17v3.17h-3.17zM678.96 462.53h6.03v3.17h-6.03zM687.56 462.53h3.17v3.17h-3.17zM420.98 465.39h3.17v3.17h-3.17zM555.7 465.39h6.03v3.17h-6.03zM690.43 465.39h3.17v3.17h-3.17zM418.11 468.26h6.03v3.17h-6.03zM552.83 468.26h8.9v3.17h-8.9zM676.09 468.26h3.17v3.17h-3.17zM690.43 468.26h3.17v3.17h-3.17zM418.11 471.13h3.17v3.17h-3.17zM552.83 471.13h3.17v3.17h-3.17zM558.57 471.13h3.17v3.17h-3.17zM572.9 471.13h6.03v3.17h-6.03zM676.09 471.13h3.17v3.17h-3.17zM687.56 471.13h3.17v3.17h-3.17zM549.97 473.99h3.17v3.17h-3.17zM575.77 473.99h3.17v3.17h-3.17zM678.96 473.99h8.9v3.17h-8.9zM570.03 476.86h3.17v3.17h-3.17zM575.77 476.86h3.17v3.17h-3.17zM547.1 479.73h3.17v3.17h-3.17zM555.7 479.73h3.17v3.17h-3.17zM564.3 479.73h8.9v3.17h-8.9zM547.1 482.59h3.17v3.17h-3.17zM570.03 482.59h6.03v3.17h-6.03zM509.84 485.46h6.03v3.17h-6.03zM552.83 485.46h3.17v3.17h-3.17zM544.24 488.33h3.17v3.17h-3.17zM549.97 488.33h3.17v3.17h-3.17zM538.5 491.19h14.63v3.17h-14.63zM678.96 491.19h8.9v3.17h-8.9zM535.64 494.06h3.17v3.17h-3.17zM547.1 494.06h3.17v3.17h-3.17zM678.96 494.06h8.9v3.17h-8.9zM535.64 496.93h3.17v3.17h-3.17zM547.1 496.93h3.17v3.17h-3.17zM538.5 499.79h3.17v3.17h-3.17zM544.24 499.79h3.17v3.17h-3.17zM673.23 505.52h6.03v3.17h-6.03zM673.23 508.39h6.03v3.17h-6.03zM673.23 511.26h6.03v3.17h-6.03zM701.89 516.99h6.03v3.17h-6.03zM701.89 519.86h3.17v3.17h-3.17zM707.63 519.86h6.03v3.17h-6.03zM713.36 522.72h3.17v3.17h-3.17zM704.76 525.59h3.17v3.17h-3.17zM716.23 525.59h3.17v3.17h-3.17zM707.63 528.46h3.17v3.17h-3.17zM719.09 528.46h3.17v3.17h-3.17zM710.49 531.32h3.17v3.17h-3.17zM721.96 531.32h3.17v3.17h-3.17zM713.36 534.19h3.17v3.17h-3.17zM724.82 534.19h3.17v3.17h-3.17zM716.23 537.06h3.17v3.17h-3.17zM727.69 537.06h3.17v3.17h-3.17zM719.09 539.92h3.17v3.17h-3.17zM730.56 542.79h3.17v3.17h-3.17zM721.96 545.66h3.17v3.17h-3.17zM724.82 548.52h8.9v3.17h-8.9zM613.03 554.26h6.03v3.17h-6.03zM613.03 557.12h6.03v3.17h-6.03zM613.03 559.99h6.03v3.17h-6.03zM739.16 562.85h6.03v3.17h-6.03zM739.16 565.72h6.03v3.17h-6.03zM767.82 594.39h6.03v3.17h-6.03zM779.29 600.12h3.17v3.17h-3.17zM782.15 602.99h3.17v3.17h-3.17zM767.82 605.85h3.17v3.17h-3.17zM785.02 605.85h3.17v3.17h-3.17zM770.69 608.72h3.17v3.17h-3.17zM790.75 614.45h3.17v3.17h-3.17zM779.29 620.18h3.17v3.17h-3.17zM793.62 620.18h3.17v3.17h-3.17zM793.62 623.05h3.17v3.17h-3.17zM787.89 625.92h8.9v3.17h-8.9zM799.35 637.38h6.03v3.17h-6.03zM799.35 640.25h8.9v3.17h-8.9zM799.35 643.12h6.03v3.17h-6.03zM810.82 654.58h8.9v3.17h-8.9zM807.95 657.45h3.17v3.17h-3.17zM822.29 657.45h3.17v3.17h-3.17zM807.95 666.05h3.17v3.17h-3.17zM833.75 668.92h3.17v3.17h-3.17zM833.75 671.78h3.17v3.17h-3.17zM816.55 674.65h3.17v2.25h-3.17zM833.75 674.65h3.17v2.25h-3.17z"/><path fill="#343135" d="M320.65 46.2h3.17v0.98h-3.17zM312.05 46.88h3.17v3.17h-3.17zM320.65 46.88h3.17v3.17h-3.17zM346.45 72.68h3.17v3.17h-3.17zM346.45 75.55h3.17v3.17h-3.17zM366.51 84.15h3.17v3.17h-3.17zM375.11 87.02h3.17v3.17h-3.17zM360.78 98.48h3.17v3.17h-3.17zM380.84 115.68h6.03v3.17h-6.03zM377.98 118.55h3.17v3.17h-3.17zM380.84 121.41h6.03v3.17h-6.03zM403.78 130.01h3.17v3.17h-3.17zM693.29 132.88h3.17v3.17h-3.17zM392.31 135.75h3.17v3.17h-3.17zM403.78 135.75h3.17v3.17h-3.17zM693.29 138.61h6.03v3.17h-6.03zM406.64 141.48h8.9v3.17h-8.9zM403.78 144.35h3.17v3.17h-3.17zM418.11 147.21h3.17v3.17h-3.17zM406.64 150.08h3.17v3.17h-3.17zM418.11 150.08h3.17v3.17h-3.17zM564.3 181.61h3.17v3.17h-3.17zM555.7 184.48h3.17v3.17h-3.17zM564.3 184.48h3.17v3.17h-3.17zM558.57 187.34h6.03v3.17h-6.03zM461.11 190.21h3.17v3.17h-3.17zM455.37 198.81h3.17v3.17h-3.17zM469.71 198.81h3.17v3.17h-3.17zM455.37 207.41h6.03v3.17h-6.03zM552.83 207.41h3.17v3.17h-3.17zM564.3 207.41h3.17v3.17h-3.17zM363.65 210.28h3.17v3.17h-3.17zM369.38 210.28h3.17v3.17h-3.17zM472.57 210.28h3.17v3.17h-3.17zM478.31 210.28h3.17v3.17h-3.17zM555.7 210.28h3.17v3.17h-3.17zM561.43 210.28h3.17v3.17h-3.17zM363.65 213.14h3.17v3.17h-3.17zM369.38 213.14h3.17v3.17h-3.17zM469.71 213.14h3.17v3.17h-3.17zM478.31 213.14h3.17v3.17h-3.17zM472.57 216.01h6.03v3.17h-6.03zM475.44 224.61h3.17v3.17h-3.17zM481.17 224.61h3.17v3.17h-3.17zM595.83 224.61h3.17v3.17h-3.17zM484.04 227.47h3.17v3.17h-3.17zM595.83 227.47h3.17v3.17h-3.17zM601.57 227.47h3.17v3.17h-3.17zM598.7 230.34h3.17v3.17h-3.17zM475.44 233.21h3.17v3.17h-3.17zM484.04 233.21h3.17v3.17h-3.17zM572.9 253.27h3.17v3.17h-3.17zM584.37 253.27h3.17v3.17h-3.17zM486.91 256.14h6.03v3.17h-6.03zM567.17 256.14h3.17v3.17h-3.17zM587.23 256.14h3.17v3.17h-3.17zM621.63 256.14h6.03v3.17h-6.03zM495.5 259.01h3.17v3.17h-3.17zM509.84 259.01h3.17v3.17h-3.17zM527.04 259.01h23.23v3.17h-23.23zM621.63 259.01h3.17v3.17h-3.17zM498.37 261.87h3.17v3.17h-3.17zM527.04 261.87h20.37v3.17h-20.37zM564.3 261.87h3.17v3.17h-3.17zM587.23 261.87h3.17v3.17h-3.17zM621.63 261.87h3.17v3.17h-3.17zM630.23 261.87h14.63v3.17h-14.63zM512.7 264.74h3.17v3.17h-3.17zM564.3 264.74h3.17v3.17h-3.17zM621.63 264.74h6.03v3.17h-6.03zM512.7 267.61h3.17v3.17h-3.17zM498.37 270.47h3.17v3.17h-3.17zM512.7 270.47h3.17v3.17h-3.17zM584.37 270.47h3.17v3.17h-3.17zM650.3 270.47h3.17v3.17h-3.17zM495.5 273.34h8.9v3.17h-8.9zM650.3 273.34h3.17v3.17h-3.17zM495.5 276.2h6.03v3.17h-6.03zM592.97 276.2h8.9v3.17h-8.9zM495.5 279.07h3.17v3.17h-3.17zM592.97 279.07h3.17v3.17h-3.17zM598.7 279.07h3.17v3.17h-3.17zM618.76 279.07h3.17v3.17h-3.17zM661.76 279.07h3.17v3.17h-3.17zM538.5 281.94h3.17v3.17h-3.17zM592.97 281.94h8.9v3.17h-8.9zM647.43 281.94h3.17v3.17h-3.17zM509.84 287.67h3.17v3.17h-3.17zM656.03 296.27h3.17v3.17h-3.17zM650.3 299.14h3.17v3.17h-3.17zM641.7 304.87h3.17v3.17h-3.17zM363.65 310.6h6.03v3.17h-6.03zM363.65 313.47h3.17v3.17h-3.17zM372.25 313.47h3.17v3.17h-3.17zM484.04 313.47h3.17v3.17h-3.17zM492.64 313.47h3.17v3.17h-3.17zM363.65 316.34h3.17v3.17h-3.17zM375.11 316.34h3.17v3.17h-3.17zM498.37 316.34h3.17v3.17h-3.17zM366.51 319.2h3.17v3.17h-3.17zM375.11 319.2h3.17v3.17h-3.17zM641.7 319.2h3.17v3.17h-3.17zM372.25 322.07h6.03v3.17h-6.03zM469.71 322.07h8.9v3.17h-8.9zM469.71 324.94h8.9v3.17h-8.9zM828.02 327.8h3.17v3.17h-3.17zM833.75 327.8h3.17v3.17h-3.17zM644.56 330.67h3.17v3.17h-3.17zM656.03 333.53h3.17v3.17h-3.17zM658.9 336.4h3.17v3.17h-3.17zM469.71 339.27h6.03v3.17h-6.03zM469.71 342.13h6.03v3.17h-6.03zM658.9 342.13h3.17v3.17h-3.17zM701.89 342.13h3.17v3.17h-3.17zM469.71 345h6.03v3.17h-6.03zM699.03 345h3.17v3.17h-3.17zM707.63 345h3.17v3.17h-3.17zM710.49 347.87h3.17v3.17h-3.17zM653.16 350.73h3.17v3.17h-3.17zM489.77 353.6h3.17v3.17h-3.17zM707.63 353.6h8.9v3.17h-8.9zM489.77 356.47h3.17v3.17h-3.17zM492.64 362.2h3.17v3.17h-3.17zM653.16 362.2h3.17v3.17h-3.17zM638.83 376.53h3.17v3.17h-3.17zM644.56 385.13h11.77v3.17h-11.77zM656.03 388h3.17v3.17h-3.17zM690.43 388h6.03v3.17h-6.03zM656.03 390.86h3.17v3.17h-3.17zM696.16 390.86h3.17v3.17h-3.17zM684.69 393.73h3.17v3.17h-3.17zM696.16 393.73h3.17v3.17h-3.17zM501.24 396.6h3.17v3.17h-3.17zM650.3 396.6h3.17v3.17h-3.17zM684.69 396.6h8.9v3.17h-8.9zM759.22 399.46h6.03v3.17h-6.03zM756.36 402.33h3.17v3.17h-3.17zM764.96 402.33h3.17v3.17h-3.17zM756.36 405.2h3.17v3.17h-3.17zM764.96 405.2h3.17v3.17h-3.17zM756.36 408.06h6.03v3.17h-6.03zM764.96 408.06h3.17v3.17h-3.17zM504.1 416.66h3.17v3.17h-3.17zM661.76 425.26h6.03v3.17h-6.03zM661.76 428.13h3.17v3.17h-3.17zM667.49 428.13h3.17v3.17h-3.17zM650.3 431h3.17v3.17h-3.17zM661.76 431h8.9v3.17h-8.9zM570.03 439.6h3.17v3.17h-3.17zM544.24 442.46h3.17v3.17h-3.17zM572.9 442.46h3.17v3.17h-3.17zM661.76 442.46h3.17v3.17h-3.17zM676.09 442.46h3.17v3.17h-3.17zM681.83 442.46h3.17v3.17h-3.17zM524.17 445.33h11.77v3.17h-11.77zM544.24 445.33h3.17v3.17h-3.17zM561.43 445.33h3.17v3.17h-3.17zM527.04 448.19h8.9v3.17h-8.9zM547.1 448.19h3.17v3.17h-3.17zM558.57 448.19h3.17v3.17h-3.17zM601.57 448.19h3.17v3.17h-3.17zM661.76 448.19h3.17v3.17h-3.17zM676.09 448.19h3.17v3.17h-3.17zM681.83 448.19h3.17v3.17h-3.17zM592.97 451.06h3.17v3.17h-3.17zM601.57 451.06h3.17v3.17h-3.17zM661.76 451.06h3.17v3.17h-3.17zM595.83 453.93h8.9v3.17h-8.9zM658.9 453.93h3.17v3.17h-3.17zM644.56 456.79h14.63v3.17h-14.63zM684.69 459.66h3.17v3.17h-3.17zM558.57 462.53h3.17v3.17h-3.17zM690.43 462.53h3.17v3.17h-3.17zM418.11 465.39h3.17v3.17h-3.17zM423.84 465.39h3.17v3.17h-3.17zM676.09 465.39h3.17v3.17h-3.17zM415.24 468.26h3.17v3.17h-3.17zM423.84 468.26h3.17v3.17h-3.17zM572.9 468.26h6.03v3.17h-6.03zM415.24 471.13h3.17v3.17h-3.17zM420.98 471.13h3.17v3.17h-3.17zM549.97 471.13h3.17v3.17h-3.17zM558.57 473.99h3.17v3.17h-3.17zM570.03 473.99h3.17v3.17h-3.17zM676.09 473.99h3.17v3.17h-3.17zM547.1 476.86h3.17v3.17h-3.17zM558.57 479.73h6.03v3.17h-6.03zM575.77 479.73h3.17v3.17h-3.17zM509.84 482.59h6.03v3.17h-6.03zM555.7 482.59h14.63v3.17h-14.63zM506.97 485.46h3.17v3.17h-3.17zM544.24 485.46h3.17v3.17h-3.17zM570.03 485.46h6.03v3.17h-6.03zM509.84 488.33h3.17v3.17h-3.17zM552.83 488.33h3.17v3.17h-3.17zM678.96 488.33h3.17v3.17h-3.17zM676.09 491.19h3.17v3.17h-3.17zM687.56 494.06h3.17v3.17h-3.17zM535.64 499.79h3.17v3.17h-3.17zM547.1 499.79h3.17v3.17h-3.17zM541.37 502.66h3.17v3.17h-3.17zM673.23 502.66h6.03v3.17h-6.03zM670.36 505.52h3.17v3.17h-3.17zM678.96 505.52h3.17v3.17h-3.17zM670.36 508.39h3.17v3.17h-3.17zM678.96 508.39h3.17v3.17h-3.17zM670.36 511.26h3.17v3.17h-3.17zM678.96 511.26h3.17v3.17h-3.17zM699.03 514.12h6.03v3.17h-6.03zM699.03 516.99h3.17v3.17h-3.17zM707.63 516.99h3.17v3.17h-3.17zM699.03 519.86h3.17v3.17h-3.17zM701.89 522.72h3.17v3.17h-3.17zM707.63 531.32h3.17v3.17h-3.17zM710.49 534.19h3.17v3.17h-3.17zM713.36 537.06h3.17v3.17h-3.17zM716.23 539.92h3.17v3.17h-3.17zM730.56 539.92h3.17v3.17h-3.17zM719.09 542.79h3.17v3.17h-3.17zM733.42 545.66h3.17v3.17h-3.17zM721.96 548.52h3.17v3.17h-3.17zM733.42 548.52h3.17v3.17h-3.17zM613.03 551.39h6.03v3.17h-6.03zM733.42 551.39h3.17v3.17h-3.17zM610.16 554.26h3.17v3.17h-3.17zM618.76 554.26h3.17v3.17h-3.17zM610.16 557.12h3.17v3.17h-3.17zM618.76 557.12h3.17v3.17h-3.17zM610.16 559.99h3.17v3.17h-3.17zM618.76 559.99h3.17v3.17h-3.17zM739.16 559.99h6.03v3.17h-6.03zM736.29 562.85h3.17v3.17h-3.17zM744.89 562.85h3.17v3.17h-3.17zM736.29 565.72h3.17v3.17h-3.17zM744.89 565.72h3.17v3.17h-3.17zM739.16 568.59h6.03v3.17h-6.03zM764.96 594.39h3.17v3.17h-3.17zM773.56 594.39h3.17v3.17h-3.17zM764.96 597.25h3.17v3.17h-3.17zM787.89 608.72h3.17v3.17h-3.17zM776.42 617.32h3.17v3.17h-3.17zM782.15 623.05h3.17v3.17h-3.17zM785.02 625.92h3.17v3.17h-3.17zM790.75 628.78h6.03v3.17h-6.03zM799.35 634.52h6.03v3.17h-6.03zM796.49 637.38h3.17v3.17h-3.17zM805.09 637.38h3.17v3.17h-3.17zM796.49 640.25h3.17v3.17h-3.17zM796.49 643.12h3.17v3.17h-3.17zM805.09 643.12h3.17v3.17h-3.17zM799.35 645.98h6.03v3.17h-6.03zM807.95 654.58h3.17v3.17h-3.17zM819.42 654.58h3.17v3.17h-3.17zM825.15 657.45h3.17v3.17h-3.17zM805.09 660.32h3.17v3.17h-3.17zM828.02 660.32h3.17v3.17h-3.17zM805.09 663.18h3.17v3.17h-3.17zM830.89 663.18h3.17v3.17h-3.17zM807.95 668.92h3.17v3.17h-3.17zM810.82 671.78h3.17v3.17h-3.17zM813.69 674.65h3.17v2.25h-3.17z"/><path fill="#484350" d="M363.65 87.02h3.17v3.17h-3.17zM372.25 87.02h3.17v3.17h-3.17zM375.11 89.88h3.17v3.17h-3.17zM360.78 92.75h3.17v3.17h-3.17zM375.11 92.75h3.17v3.17h-3.17zM375.11 95.62h3.17v3.17h-3.17zM366.51 101.35h6.03v3.17h-6.03zM392.31 130.01h3.17v3.17h-3.17zM398.04 138.61h3.17v3.17h-3.17zM409.51 144.35h3.17v3.17h-3.17zM409.51 147.21h6.03v3.17h-6.03zM463.97 190.21h3.17v3.17h-3.17zM469.71 190.21h3.17v3.17h-3.17zM461.11 193.08h3.17v3.17h-3.17zM469.71 195.94h3.17v3.17h-3.17zM458.24 198.81h3.17v3.17h-3.17zM463.97 201.68h3.17v3.17h-3.17zM458.24 204.54h6.03v3.17h-6.03zM478.31 227.47h6.03v3.17h-6.03zM481.17 230.34h3.17v3.17h-3.17zM489.77 238.94h8.9v3.17h-8.9zM486.91 241.81h11.77v3.17h-11.77zM495.5 244.67h6.03v3.17h-6.03zM498.37 247.54h8.9v3.17h-8.9zM501.24 250.41h6.03v3.17h-6.03zM610.16 250.41h3.17v3.17h-3.17zM621.63 250.41h3.17v3.17h-3.17zM486.91 253.27h3.17v3.17h-3.17zM501.24 253.27h6.03v3.17h-6.03zM578.63 253.27h3.17v3.17h-3.17zM495.5 256.14h14.63v3.17h-14.63zM615.9 256.14h3.17v3.17h-3.17zM501.24 259.01h3.17v3.17h-3.17zM501.24 261.87h3.17v3.17h-3.17zM509.84 261.87h3.17v3.17h-3.17zM509.84 264.74h3.17v3.17h-3.17zM638.83 264.74h6.03v3.17h-6.03zM509.84 267.61h3.17v3.17h-3.17zM584.37 267.61h3.17v3.17h-3.17zM644.56 267.61h3.17v3.17h-3.17zM504.1 270.47h3.17v3.17h-3.17zM509.84 270.47h3.17v3.17h-3.17zM567.17 270.47h3.17v3.17h-3.17zM647.43 270.47h3.17v3.17h-3.17zM504.1 273.34h8.9v3.17h-8.9zM647.43 273.34h3.17v3.17h-3.17zM506.97 276.2h11.77v3.17h-11.77zM621.63 276.2h3.17v3.17h-3.17zM509.84 279.07h6.03v3.17h-6.03zM621.63 279.07h3.17v3.17h-3.17zM501.24 281.94h11.77v3.17h-11.77zM524.17 281.94h3.17v3.17h-3.17zM618.76 281.94h3.17v3.17h-3.17zM661.76 281.94h3.17v3.17h-3.17zM506.97 284.8h8.9v3.17h-8.9zM584.37 284.8h3.17v3.17h-3.17zM621.63 284.8h3.17v3.17h-3.17zM647.43 284.8h3.17v3.17h-3.17zM512.7 287.67h3.17v3.17h-3.17zM538.5 287.67h3.17v3.17h-3.17zM618.76 287.67h8.9v3.17h-8.9zM515.57 290.54h3.17v3.17h-3.17zM544.24 290.54h3.17v3.17h-3.17zM607.3 290.54h8.9v3.17h-8.9zM592.97 293.4h3.17v3.17h-3.17zM521.3 302h3.17v3.17h-3.17zM644.56 302h3.17v3.17h-3.17zM518.44 304.87h3.17v3.17h-3.17zM535.64 304.87h3.17v3.17h-3.17zM515.57 307.74h3.17v3.17h-3.17zM512.7 310.6h3.17v3.17h-3.17zM484.04 316.34h3.17v3.17h-3.17zM506.97 316.34h3.17v3.17h-3.17zM484.04 319.2h3.17v3.17h-3.17zM501.24 319.2h6.03v3.17h-6.03zM486.91 322.07h3.17v3.17h-3.17zM641.7 322.07h3.17v3.17h-3.17zM644.56 333.53h3.17v3.17h-3.17zM495.5 336.4h3.17v3.17h-3.17zM656.03 336.4h3.17v3.17h-3.17zM644.56 339.27h6.03v3.17h-6.03zM653.16 339.27h6.03v3.17h-6.03zM653.16 345h3.17v3.17h-3.17zM492.64 353.6h3.17v3.17h-3.17zM492.64 356.47h3.17v3.17h-3.17zM501.24 373.67h3.17v3.17h-3.17zM653.16 393.73h3.17v3.17h-3.17zM504.1 396.6h3.17v3.17h-3.17zM501.24 399.46h3.17v3.17h-3.17zM518.44 405.2h3.17v3.17h-3.17zM638.83 408.06h3.17v3.17h-3.17zM638.83 410.93h3.17v3.17h-3.17zM506.97 413.8h3.17v3.17h-3.17zM501.24 416.66h3.17v3.17h-3.17zM621.63 425.26h3.17v3.17h-3.17zM641.7 425.26h3.17v3.17h-3.17zM541.37 428.13h3.17v3.17h-3.17zM613.03 428.13h14.63v3.17h-14.63zM644.56 428.13h3.17v3.17h-3.17zM627.36 431h3.17v3.17h-3.17zM627.36 433.86h6.03v3.17h-6.03zM630.23 436.73h6.03v3.17h-6.03zM653.16 436.73h3.17v3.17h-3.17zM572.9 439.6h3.17v3.17h-3.17zM633.1 439.6h3.17v3.17h-3.17zM575.77 442.46h3.17v3.17h-3.17zM601.57 442.46h3.17v3.17h-3.17zM635.96 442.46h3.17v3.17h-3.17zM658.9 442.46h3.17v3.17h-3.17zM578.63 445.33h6.03v3.17h-6.03zM635.96 445.33h3.17v3.17h-3.17zM658.9 445.33h3.17v3.17h-3.17zM555.7 448.19h3.17v3.17h-3.17zM658.9 448.19h3.17v3.17h-3.17zM598.7 451.06h3.17v3.17h-3.17zM658.9 451.06h3.17v3.17h-3.17zM653.16 453.93h6.03v3.17h-6.03zM684.69 462.53h3.17v3.17h-3.17zM678.96 465.39h3.17v3.17h-3.17zM687.56 465.39h3.17v3.17h-3.17zM687.56 468.26h3.17v3.17h-3.17zM555.7 471.13h3.17v3.17h-3.17zM678.96 471.13h3.17v3.17h-3.17zM684.69 471.13h3.17v3.17h-3.17zM552.83 473.99h6.03v3.17h-6.03zM572.9 473.99h3.17v3.17h-3.17zM549.97 476.86h3.17v3.17h-3.17zM555.7 476.86h3.17v3.17h-3.17zM572.9 476.86h3.17v3.17h-3.17zM549.97 479.73h3.17v3.17h-3.17zM572.9 479.73h3.17v3.17h-3.17zM552.83 482.59h3.17v3.17h-3.17zM547.1 485.46h6.03v3.17h-6.03zM547.1 488.33h3.17v3.17h-3.17zM538.5 494.06h8.9v3.17h-8.9zM538.5 496.93h3.17v3.17h-3.17zM544.24 496.93h3.17v3.17h-3.17zM541.37 499.79h3.17v3.17h-3.17zM704.76 519.86h3.17v3.17h-3.17zM704.76 522.72h8.9v3.17h-8.9zM707.63 525.59h8.9v3.17h-8.9zM710.49 528.46h3.17v3.17h-3.17zM716.23 528.46h3.17v3.17h-3.17zM713.36 531.32h3.17v3.17h-3.17zM719.09 531.32h3.17v3.17h-3.17zM716.23 534.19h3.17v3.17h-3.17zM721.96 534.19h3.17v3.17h-3.17zM719.09 537.06h8.9v3.17h-8.9zM721.96 539.92h8.9v3.17h-8.9zM721.96 542.79h3.17v3.17h-3.17zM730.56 545.66h3.17v3.17h-3.17zM767.82 597.25h3.17v3.17h-3.17zM776.42 597.25h3.17v3.17h-3.17zM785.02 608.72h3.17v3.17h-3.17zM773.56 611.59h3.17v3.17h-3.17zM787.89 611.59h3.17v3.17h-3.17zM776.42 614.45h3.17v3.17h-3.17zM779.29 617.32h3.17v3.17h-3.17zM790.75 617.32h3.17v3.17h-3.17zM782.15 620.18h3.17v3.17h-3.17zM790.75 620.18h3.17v3.17h-3.17zM785.02 623.05h3.17v3.17h-3.17zM790.75 623.05h3.17v3.17h-3.17zM810.82 657.45h3.17v3.17h-3.17zM819.42 657.45h3.17v3.17h-3.17zM807.95 660.32h3.17v3.17h-3.17zM825.15 660.32h3.17v3.17h-3.17zM807.95 663.18h3.17v3.17h-3.17zM828.02 663.18h3.17v3.17h-3.17zM830.89 666.05h3.17v3.17h-3.17zM810.82 668.92h3.17v3.17h-3.17zM813.69 671.78h3.17v3.17h-3.17zM830.89 674.65h3.17v2.25h-3.17z"/><path fill="#4c475c" d="M366.51 87.02h3.17v3.17h-3.17zM363.65 98.48h3.17v3.17h-3.17zM395.18 124.28h6.03v3.17h-6.03zM400.91 127.15h3.17v3.17h-3.17zM400.91 130.01h3.17v3.17h-3.17zM400.91 132.88h3.17v3.17h-3.17zM395.18 135.75h3.17v3.17h-3.17zM400.91 135.75h3.17v3.17h-3.17zM466.84 190.21h3.17v3.17h-3.17zM463.97 193.08h3.17v3.17h-3.17zM469.71 193.08h3.17v3.17h-3.17zM461.11 195.94h3.17v3.17h-3.17zM466.84 198.81h3.17v3.17h-3.17zM458.24 201.68h6.03v3.17h-6.03zM478.31 230.34h3.17v3.17h-3.17zM484.04 244.67h11.77v3.17h-11.77zM486.91 247.54h3.17v3.17h-3.17zM495.5 247.54h3.17v3.17h-3.17zM613.03 247.54h3.17v3.17h-3.17zM618.76 247.54h3.17v3.17h-3.17zM481.17 250.41h3.17v3.17h-3.17zM486.91 250.41h3.17v3.17h-3.17zM498.37 250.41h3.17v3.17h-3.17zM489.77 253.27h11.77v3.17h-11.77zM613.03 253.27h3.17v3.17h-3.17zM618.76 253.27h3.17v3.17h-3.17zM504.1 259.01h6.03v3.17h-6.03zM504.1 261.87h6.03v3.17h-6.03zM504.1 264.74h6.03v3.17h-6.03zM627.36 264.74h3.17v3.17h-3.17zM504.1 267.61h6.03v3.17h-6.03zM641.7 267.61h3.17v3.17h-3.17zM506.97 270.47h3.17v3.17h-3.17zM570.03 270.47h3.17v3.17h-3.17zM644.56 270.47h3.17v3.17h-3.17zM570.03 273.34h3.17v3.17h-3.17zM621.63 273.34h8.9v3.17h-8.9zM570.03 276.2h3.17v3.17h-3.17zM624.5 276.2h3.17v3.17h-3.17zM647.43 276.2h3.17v3.17h-3.17zM515.57 279.07h3.17v3.17h-3.17zM581.5 279.07h3.17v3.17h-3.17zM653.16 279.07h3.17v3.17h-3.17zM512.7 281.94h3.17v3.17h-3.17zM527.04 281.94h3.17v3.17h-3.17zM532.77 281.94h3.17v3.17h-3.17zM621.63 281.94h3.17v3.17h-3.17zM635.96 281.94h3.17v3.17h-3.17zM641.7 281.94h3.17v3.17h-3.17zM656.03 281.94h6.03v3.17h-6.03zM635.96 284.8h3.17v3.17h-3.17zM515.57 287.67h3.17v3.17h-3.17zM587.23 287.67h3.17v3.17h-3.17zM627.36 287.67h3.17v3.17h-3.17zM635.96 287.67h3.17v3.17h-3.17zM518.44 290.54h3.17v3.17h-3.17zM538.5 290.54h6.03v3.17h-6.03zM615.9 290.54h11.77v3.17h-11.77zM521.3 293.4h3.17v3.17h-3.17zM610.16 293.4h3.17v3.17h-3.17zM521.3 296.27h3.17v3.17h-3.17zM524.17 299.14h3.17v3.17h-3.17zM615.9 299.14h6.03v3.17h-6.03zM524.17 302h3.17v3.17h-3.17zM521.3 304.87h8.9v3.17h-8.9zM518.44 307.74h11.77v3.17h-11.77zM515.57 310.6h3.17v3.17h-3.17zM509.84 313.47h6.03v3.17h-6.03zM489.77 316.34h8.9v3.17h-8.9zM498.37 319.2h3.17v3.17h-3.17zM506.97 319.2h3.17v3.17h-3.17zM501.24 322.07h6.03v3.17h-6.03zM489.77 324.94h3.17v3.17h-3.17zM641.7 333.53h3.17v3.17h-3.17zM641.7 336.4h6.03v3.17h-6.03zM641.7 339.27h3.17v3.17h-3.17zM641.7 342.13h14.63v3.17h-14.63zM650.3 347.87h3.17v3.17h-3.17zM492.64 350.73h3.17v3.17h-3.17zM650.3 350.73h3.17v3.17h-3.17zM495.5 353.6h3.17v3.17h-3.17zM495.5 356.47h3.17v3.17h-3.17zM495.5 359.33h3.17v3.17h-3.17zM495.5 362.2h3.17v3.17h-3.17zM650.3 362.2h3.17v3.17h-3.17zM495.5 365.07h6.03v3.17h-6.03zM638.83 373.67h3.17v3.17h-3.17zM509.84 382.27h3.17v3.17h-3.17zM509.84 388h3.17v3.17h-3.17zM644.56 388h11.77v3.17h-11.77zM644.56 390.86h6.03v3.17h-6.03zM504.1 399.46h3.17v3.17h-3.17zM641.7 399.46h3.17v3.17h-3.17zM495.5 402.33h6.03v3.17h-6.03zM506.97 405.2h6.03v3.17h-6.03zM504.1 408.06h8.9v3.17h-8.9zM635.96 408.06h3.17v3.17h-3.17zM501.24 410.93h8.9v3.17h-8.9zM529.9 410.93h3.17v3.17h-3.17zM633.1 410.93h6.03v3.17h-6.03zM492.64 413.8h3.17v3.17h-3.17zM529.9 413.8h3.17v3.17h-3.17zM635.96 413.8h6.03v3.17h-6.03zM498.37 416.66h3.17v3.17h-3.17zM638.83 419.53h3.17v3.17h-3.17zM618.76 422.4h8.9v3.17h-8.9zM638.83 422.4h3.17v3.17h-3.17zM541.37 425.26h3.17v3.17h-3.17zM564.3 425.26h3.17v3.17h-3.17zM613.03 425.26h8.9v3.17h-8.9zM624.5 425.26h3.17v3.17h-3.17zM544.24 428.13h3.17v3.17h-3.17zM564.3 428.13h6.03v3.17h-6.03zM610.16 428.13h3.17v3.17h-3.17zM627.36 428.13h3.17v3.17h-3.17zM564.3 431h3.17v3.17h-3.17zM604.43 431h6.03v3.17h-6.03zM624.5 431h3.17v3.17h-3.17zM630.23 431h3.17v3.17h-3.17zM644.56 431h6.03v3.17h-6.03zM633.1 433.86h3.17v3.17h-3.17zM650.3 433.86h3.17v3.17h-3.17zM567.17 436.73h8.9v3.17h-8.9zM575.77 439.6h3.17v3.17h-3.17zM635.96 439.6h3.17v3.17h-3.17zM656.03 439.6h3.17v3.17h-3.17zM578.63 442.46h3.17v3.17h-3.17zM638.83 442.46h3.17v3.17h-3.17zM584.37 445.33h6.03v3.17h-6.03zM638.83 445.33h3.17v3.17h-3.17zM552.83 448.19h3.17v3.17h-3.17zM592.97 448.19h3.17v3.17h-3.17zM638.83 448.19h3.17v3.17h-3.17zM656.03 451.06h3.17v3.17h-3.17zM644.56 453.93h3.17v3.17h-3.17zM681.83 465.39h6.03v3.17h-6.03zM678.96 468.26h8.9v3.17h-8.9zM681.83 471.13h3.17v3.17h-3.17zM552.83 476.86h3.17v3.17h-3.17zM552.83 479.73h3.17v3.17h-3.17zM549.97 482.59h3.17v3.17h-3.17zM541.37 496.93h3.17v3.17h-3.17zM713.36 528.46h3.17v3.17h-3.17zM716.23 531.32h3.17v3.17h-3.17zM719.09 534.19h3.17v3.17h-3.17zM724.82 542.79h6.03v3.17h-6.03zM724.82 545.66h6.03v3.17h-6.03zM770.69 597.25h6.03v3.17h-6.03zM767.82 600.12h3.17v3.17h-3.17zM767.82 602.99h3.17v3.17h-3.17zM779.29 602.99h3.17v3.17h-3.17zM782.15 605.85h3.17v3.17h-3.17zM773.56 608.72h3.17v3.17h-3.17zM787.89 614.45h3.17v3.17h-3.17zM787.89 623.05h3.17v3.17h-3.17zM813.69 657.45h6.03v3.17h-6.03zM810.82 660.32h3.17v3.17h-3.17zM822.29 660.32h3.17v3.17h-3.17zM810.82 666.05h3.17v3.17h-3.17zM830.89 668.92h3.17v3.17h-3.17zM830.89 671.78h3.17v3.17h-3.17zM819.42 674.65h11.77v2.25h-11.77z"/><path fill="#4f4b68" d="M369.38 87.02h3.17v3.17h-3.17zM363.65 89.88h3.17v3.17h-3.17zM372.25 98.48h3.17v3.17h-3.17zM395.18 127.15h6.03v3.17h-6.03zM395.18 130.01h3.17v3.17h-3.17zM395.18 132.88h3.17v3.17h-3.17zM398.04 135.75h3.17v3.17h-3.17zM466.84 193.08h3.17v3.17h-3.17zM463.97 195.94h6.03v3.17h-6.03zM461.11 198.81h6.03v3.17h-6.03zM484.04 247.54h3.17v3.17h-3.17zM489.77 247.54h6.03v3.17h-6.03zM615.9 247.54h3.17v3.17h-3.17zM484.04 250.41h3.17v3.17h-3.17zM489.77 250.41h8.9v3.17h-8.9zM613.03 250.41h3.17v3.17h-3.17zM618.76 250.41h3.17v3.17h-3.17zM484.04 253.27h3.17v3.17h-3.17zM615.9 253.27h3.17v3.17h-3.17zM570.03 256.14h8.9v3.17h-8.9zM584.37 256.14h3.17v3.17h-3.17zM567.17 259.01h6.03v3.17h-6.03zM567.17 261.87h3.17v3.17h-3.17zM567.17 264.74h3.17v3.17h-3.17zM635.96 264.74h3.17v3.17h-3.17zM567.17 267.61h3.17v3.17h-3.17zM624.5 267.61h3.17v3.17h-3.17zM635.96 267.61h6.03v3.17h-6.03zM578.63 270.47h6.03v3.17h-6.03zM624.5 270.47h6.03v3.17h-6.03zM638.83 270.47h6.03v3.17h-6.03zM572.9 273.34h3.17v3.17h-3.17zM578.63 273.34h6.03v3.17h-6.03zM630.23 273.34h3.17v3.17h-3.17zM638.83 273.34h3.17v3.17h-3.17zM644.56 273.34h3.17v3.17h-3.17zM567.17 276.2h3.17v3.17h-3.17zM572.9 276.2h11.77v3.17h-11.77zM627.36 276.2h3.17v3.17h-3.17zM635.96 276.2h11.77v3.17h-11.77zM570.03 279.07h11.77v3.17h-11.77zM624.5 279.07h3.17v3.17h-3.17zM635.96 279.07h8.9v3.17h-8.9zM647.43 279.07h6.03v3.17h-6.03zM515.57 281.94h3.17v3.17h-3.17zM581.5 281.94h3.17v3.17h-3.17zM633.1 281.94h3.17v3.17h-3.17zM638.83 281.94h3.17v3.17h-3.17zM653.16 281.94h3.17v3.17h-3.17zM515.57 284.8h3.17v3.17h-3.17zM535.64 284.8h3.17v3.17h-3.17zM624.5 284.8h3.17v3.17h-3.17zM633.1 284.8h3.17v3.17h-3.17zM661.76 284.8h3.17v3.17h-3.17zM518.44 287.67h3.17v3.17h-3.17zM630.23 287.67h6.03v3.17h-6.03zM661.76 287.67h3.17v3.17h-3.17zM590.1 290.54h3.17v3.17h-3.17zM627.36 290.54h6.03v3.17h-6.03zM635.96 290.54h3.17v3.17h-3.17zM535.64 293.4h6.03v3.17h-6.03zM607.3 293.4h3.17v3.17h-3.17zM613.03 293.4h14.63v3.17h-14.63zM524.17 296.27h3.17v3.17h-3.17zM610.16 296.27h14.63v3.17h-14.63zM653.16 296.27h3.17v3.17h-3.17zM527.04 299.14h3.17v3.17h-3.17zM595.83 299.14h3.17v3.17h-3.17zM613.03 299.14h3.17v3.17h-3.17zM621.63 299.14h3.17v3.17h-3.17zM647.43 299.14h3.17v3.17h-3.17zM615.9 302h11.77v3.17h-11.77zM529.9 307.74h3.17v3.17h-3.17zM518.44 310.6h11.77v3.17h-11.77zM515.57 313.47h8.9v3.17h-8.9zM486.91 316.34h3.17v3.17h-3.17zM509.84 316.34h3.17v3.17h-3.17zM638.83 316.34h3.17v3.17h-3.17zM486.91 319.2h11.77v3.17h-11.77zM495.5 322.07h6.03v3.17h-6.03zM506.97 322.07h3.17v3.17h-3.17zM501.24 324.94h6.03v3.17h-6.03zM641.7 327.8h3.17v3.17h-3.17zM641.7 330.67h3.17v3.17h-3.17zM638.83 333.53h3.17v3.17h-3.17zM638.83 336.4h3.17v3.17h-3.17zM495.5 339.27h3.17v3.17h-3.17zM638.83 339.27h3.17v3.17h-3.17zM641.7 345h11.77v3.17h-11.77zM492.64 347.87h3.17v3.17h-3.17zM641.7 347.87h8.9v3.17h-8.9zM495.5 350.73h3.17v3.17h-3.17zM644.56 350.73h6.03v3.17h-6.03zM498.37 353.6h6.03v3.17h-6.03zM647.43 353.6h6.03v3.17h-6.03zM498.37 356.47h8.9v3.17h-8.9zM498.37 359.33h3.17v3.17h-3.17zM498.37 362.2h3.17v3.17h-3.17zM641.7 388h3.17v3.17h-3.17zM509.84 390.86h3.17v3.17h-3.17zM638.83 390.86h6.03v3.17h-6.03zM650.3 390.86h6.03v3.17h-6.03zM506.97 393.73h3.17v3.17h-3.17zM638.83 393.73h8.9v3.17h-8.9zM506.97 396.6h3.17v3.17h-3.17zM647.43 396.6h3.17v3.17h-3.17zM506.97 399.46h3.17v3.17h-3.17zM501.24 402.33h11.77v3.17h-11.77zM501.24 405.2h6.03v3.17h-6.03zM512.7 405.2h6.03v3.17h-6.03zM527.04 405.2h3.17v3.17h-3.17zM635.96 405.2h3.17v3.17h-3.17zM501.24 408.06h3.17v3.17h-3.17zM512.7 408.06h3.17v3.17h-3.17zM529.9 408.06h3.17v3.17h-3.17zM633.1 408.06h3.17v3.17h-3.17zM509.84 410.93h3.17v3.17h-3.17zM532.77 410.93h6.03v3.17h-6.03zM630.23 410.93h3.17v3.17h-3.17zM495.5 413.8h11.77v3.17h-11.77zM532.77 413.8h3.17v3.17h-3.17zM630.23 413.8h6.03v3.17h-6.03zM630.23 416.66h11.77v3.17h-11.77zM532.77 419.53h3.17v3.17h-3.17zM610.16 419.53h28.97v3.17h-28.97zM535.64 422.4h3.17v3.17h-3.17zM541.37 422.4h6.03v3.17h-6.03zM561.43 422.4h6.03v3.17h-6.03zM610.16 422.4h8.9v3.17h-8.9zM627.36 422.4h11.77v3.17h-11.77zM538.5 425.26h3.17v3.17h-3.17zM544.24 425.26h6.03v3.17h-6.03zM561.43 425.26h3.17v3.17h-3.17zM567.17 425.26h3.17v3.17h-3.17zM607.3 425.26h6.03v3.17h-6.03zM627.36 425.26h6.03v3.17h-6.03zM635.96 425.26h6.03v3.17h-6.03zM547.1 428.13h3.17v3.17h-3.17zM561.43 428.13h3.17v3.17h-3.17zM570.03 428.13h14.63v3.17h-14.63zM604.43 428.13h6.03v3.17h-6.03zM630.23 428.13h3.17v3.17h-3.17zM638.83 428.13h6.03v3.17h-6.03zM561.43 431h3.17v3.17h-3.17zM578.63 431h6.03v3.17h-6.03zM601.57 431h3.17v3.17h-3.17zM633.1 431h3.17v3.17h-3.17zM638.83 431h6.03v3.17h-6.03zM561.43 433.86h6.03v3.17h-6.03zM601.57 433.86h6.03v3.17h-6.03zM635.96 433.86h3.17v3.17h-3.17zM641.7 433.86h8.9v3.17h-8.9zM564.3 436.73h3.17v3.17h-3.17zM575.77 436.73h3.17v3.17h-3.17zM592.97 436.73h3.17v3.17h-3.17zM635.96 436.73h3.17v3.17h-3.17zM644.56 436.73h8.9v3.17h-8.9zM564.3 439.6h3.17v3.17h-3.17zM578.63 439.6h3.17v3.17h-3.17zM601.57 439.6h3.17v3.17h-3.17zM638.83 439.6h3.17v3.17h-3.17zM561.43 442.46h3.17v3.17h-3.17zM581.5 442.46h8.9v3.17h-8.9zM547.1 445.33h3.17v3.17h-3.17zM590.1 445.33h3.17v3.17h-3.17zM595.83 448.19h6.03v3.17h-6.03zM641.7 451.06h3.17v3.17h-3.17zM647.43 453.93h6.03v3.17h-6.03zM776.42 600.12h3.17v3.17h-3.17zM770.69 605.85h3.17v3.17h-3.17zM779.29 605.85h3.17v3.17h-3.17zM782.15 608.72h3.17v3.17h-3.17zM776.42 611.59h3.17v3.17h-3.17zM785.02 611.59h3.17v3.17h-3.17zM779.29 614.45h3.17v3.17h-3.17zM782.15 617.32h8.9v3.17h-8.9zM785.02 620.18h6.03v3.17h-6.03zM813.69 660.32h8.9v3.17h-8.9zM810.82 663.18h3.17v3.17h-3.17zM825.15 663.18h3.17v3.17h-3.17zM828.02 666.05h3.17v3.17h-3.17zM813.69 668.92h3.17v3.17h-3.17zM828.02 668.92h3.17v3.17h-3.17zM816.55 671.78h3.17v3.17h-3.17zM828.02 671.78h3.17v3.17h-3.17z"/><path fill="#4f527b" d="M366.51 89.88h6.03v3.17h-6.03zM372.25 92.75h3.17v3.17h-3.17zM366.51 95.62h3.17v3.17h-3.17zM581.5 259.01h6.03v3.17h-6.03zM570.03 261.87h3.17v3.17h-3.17zM578.63 261.87h6.03v3.17h-6.03zM570.03 264.74h3.17v3.17h-3.17zM581.5 264.74h3.17v3.17h-3.17zM630.23 264.74h3.17v3.17h-3.17zM578.63 267.61h3.17v3.17h-3.17zM627.36 267.61h6.03v3.17h-6.03zM564.3 281.94h8.9v3.17h-8.9zM627.36 281.94h3.17v3.17h-3.17zM521.3 284.8h3.17v3.17h-3.17zM564.3 284.8h3.17v3.17h-3.17zM653.16 284.8h6.03v3.17h-6.03zM521.3 287.67h3.17v3.17h-3.17zM529.9 287.67h6.03v3.17h-6.03zM561.43 287.67h3.17v3.17h-3.17zM524.17 290.54h11.77v3.17h-11.77zM558.57 290.54h3.17v3.17h-3.17zM527.04 293.4h6.03v3.17h-6.03zM544.24 293.4h3.17v3.17h-3.17zM555.7 293.4h6.03v3.17h-6.03zM656.03 293.4h3.17v3.17h-3.17zM535.64 296.27h6.03v3.17h-6.03zM592.97 296.27h3.17v3.17h-3.17zM627.36 296.27h8.9v3.17h-8.9zM641.7 296.27h3.17v3.17h-3.17zM535.64 299.14h3.17v3.17h-3.17zM610.16 299.14h3.17v3.17h-3.17zM627.36 299.14h6.03v3.17h-6.03zM641.7 299.14h6.03v3.17h-6.03zM630.23 302h6.03v3.17h-6.03zM641.7 302h3.17v3.17h-3.17zM613.03 304.87h3.17v3.17h-3.17zM624.5 304.87h6.03v3.17h-6.03zM635.96 304.87h6.03v3.17h-6.03zM535.64 307.74h3.17v3.17h-3.17zM615.9 307.74h6.03v3.17h-6.03zM532.77 310.6h3.17v3.17h-3.17zM527.04 313.47h6.03v3.17h-6.03zM524.17 316.34h3.17v3.17h-3.17zM635.96 316.34h3.17v3.17h-3.17zM512.7 319.2h3.17v3.17h-3.17zM518.44 319.2h8.9v3.17h-8.9zM633.1 319.2h8.9v3.17h-8.9zM509.84 322.07h3.17v3.17h-3.17zM633.1 322.07h6.03v3.17h-6.03zM492.64 324.94h3.17v3.17h-3.17zM521.3 324.94h6.03v3.17h-6.03zM633.1 324.94h3.17v3.17h-3.17zM495.5 327.8h14.63v3.17h-14.63zM521.3 327.8h6.03v3.17h-6.03zM633.1 327.8h3.17v3.17h-3.17zM495.5 330.67h17.5v3.17h-17.5zM633.1 330.67h3.17v3.17h-3.17zM504.1 333.53h14.63v3.17h-14.63zM633.1 333.53h3.17v3.17h-3.17zM504.1 336.4h3.17v3.17h-3.17zM515.57 336.4h3.17v3.17h-3.17zM635.96 336.4h3.17v3.17h-3.17zM504.1 339.27h3.17v3.17h-3.17zM635.96 339.27h3.17v3.17h-3.17zM495.5 342.13h3.17v3.17h-3.17zM504.1 342.13h3.17v3.17h-3.17zM512.7 342.13h3.17v3.17h-3.17zM635.96 342.13h3.17v3.17h-3.17zM495.5 345h3.17v3.17h-3.17zM504.1 345h8.9v3.17h-8.9zM498.37 347.87h11.77v3.17h-11.77zM506.97 350.73h3.17v3.17h-3.17zM638.83 350.73h3.17v3.17h-3.17zM506.97 353.6h3.17v3.17h-3.17zM641.7 353.6h3.17v3.17h-3.17zM644.56 356.47h3.17v3.17h-3.17zM509.84 359.33h3.17v3.17h-3.17zM644.56 359.33h8.9v3.17h-8.9zM504.1 362.2h11.77v3.17h-11.77zM647.43 362.2h3.17v3.17h-3.17zM504.1 365.07h11.77v3.17h-11.77zM644.56 365.07h3.17v3.17h-3.17zM509.84 367.93h6.03v3.17h-6.03zM641.7 367.93h3.17v3.17h-3.17zM501.24 370.8h8.9v3.17h-8.9zM504.1 373.67h6.03v3.17h-6.03zM627.36 373.67h8.9v3.17h-8.9zM509.84 376.53h3.17v3.17h-3.17zM624.5 376.53h3.17v3.17h-3.17zM633.1 376.53h3.17v3.17h-3.17zM621.63 379.4h3.17v3.17h-3.17zM633.1 379.4h3.17v3.17h-3.17zM512.7 382.27h3.17v3.17h-3.17zM621.63 382.27h3.17v3.17h-3.17zM630.23 382.27h6.03v3.17h-6.03zM624.5 385.13h14.63v3.17h-14.63zM627.36 388h8.9v3.17h-8.9zM633.1 390.86h3.17v3.17h-3.17zM512.7 393.73h3.17v3.17h-3.17zM633.1 393.73h3.17v3.17h-3.17zM509.84 396.6h3.17v3.17h-3.17zM633.1 396.6h6.03v3.17h-6.03zM512.7 399.46h3.17v3.17h-3.17zM524.17 399.46h6.03v3.17h-6.03zM630.23 399.46h8.9v3.17h-8.9zM515.57 402.33h17.5v3.17h-17.5zM627.36 402.33h6.03v3.17h-6.03zM532.77 405.2h3.17v3.17h-3.17zM613.03 405.2h6.03v3.17h-6.03zM624.5 405.2h3.17v3.17h-3.17zM492.64 408.06h8.9v3.17h-8.9zM538.5 408.06h3.17v3.17h-3.17zM610.16 408.06h11.77v3.17h-11.77zM624.5 408.06h3.17v3.17h-3.17zM495.5 410.93h3.17v3.17h-3.17zM541.37 410.93h3.17v3.17h-3.17zM610.16 410.93h17.5v3.17h-17.5zM535.64 413.8h3.17v3.17h-3.17zM541.37 413.8h3.17v3.17h-3.17zM607.3 413.8h14.63v3.17h-14.63zM544.24 416.66h3.17v3.17h-3.17zM592.97 416.66h14.63v3.17h-14.63zM535.64 419.53h3.17v3.17h-3.17zM541.37 419.53h3.17v3.17h-3.17zM547.1 419.53h3.17v3.17h-3.17zM558.57 419.53h6.03v3.17h-6.03zM567.17 419.53h3.17v3.17h-3.17zM590.1 419.53h3.17v3.17h-3.17zM549.97 422.4h6.03v3.17h-6.03zM570.03 422.4h3.17v3.17h-3.17zM587.23 422.4h3.17v3.17h-3.17zM572.9 425.26h14.63v3.17h-14.63zM590.1 425.26h8.9v3.17h-8.9zM592.97 428.13h6.03v3.17h-6.03zM549.97 433.86h8.9v3.17h-8.9zM581.5 433.86h3.17v3.17h-3.17zM555.7 436.73h3.17v3.17h-3.17zM581.5 436.73h6.03v3.17h-6.03zM547.1 439.6h3.17v3.17h-3.17zM558.57 439.6h3.17v3.17h-3.17zM592.97 439.6h8.9v3.17h-8.9zM653.16 439.6h3.17v3.17h-3.17zM547.1 442.46h3.17v3.17h-3.17zM555.7 442.46h3.17v3.17h-3.17zM595.83 442.46h6.03v3.17h-6.03zM641.7 442.46h3.17v3.17h-3.17zM552.83 445.33h3.17v3.17h-3.17zM641.7 448.19h3.17v3.17h-3.17zM653.16 451.06h3.17v3.17h-3.17zM773.56 600.12h3.17v3.17h-3.17zM773.56 602.99h3.17v3.17h-3.17zM816.55 666.05h8.9v3.17h-8.9zM819.42 668.92h6.03v3.17h-6.03z"/><path fill="#524e74" d="M372.25 89.88h3.17v3.17h-3.17zM363.65 92.75h3.17v3.17h-3.17zM363.65 95.62h3.17v3.17h-3.17zM372.25 95.62h3.17v3.17h-3.17zM366.51 98.48h6.03v3.17h-6.03zM398.04 130.01h3.17v3.17h-3.17zM398.04 132.88h3.17v3.17h-3.17zM615.9 250.41h3.17v3.17h-3.17zM578.63 256.14h6.03v3.17h-6.03zM572.9 259.01h8.9v3.17h-8.9zM584.37 264.74h3.17v3.17h-3.17zM633.1 264.74h3.17v3.17h-3.17zM570.03 267.61h3.17v3.17h-3.17zM581.5 267.61h3.17v3.17h-3.17zM633.1 267.61h3.17v3.17h-3.17zM572.9 270.47h6.03v3.17h-6.03zM630.23 270.47h8.9v3.17h-8.9zM575.77 273.34h3.17v3.17h-3.17zM633.1 273.34h6.03v3.17h-6.03zM641.7 273.34h3.17v3.17h-3.17zM630.23 276.2h6.03v3.17h-6.03zM564.3 279.07h6.03v3.17h-6.03zM627.36 279.07h8.9v3.17h-8.9zM644.56 279.07h3.17v3.17h-3.17zM518.44 281.94h6.03v3.17h-6.03zM529.9 281.94h3.17v3.17h-3.17zM561.43 281.94h3.17v3.17h-3.17zM572.9 281.94h8.9v3.17h-8.9zM624.5 281.94h3.17v3.17h-3.17zM630.23 281.94h3.17v3.17h-3.17zM650.3 281.94h3.17v3.17h-3.17zM518.44 284.8h3.17v3.17h-3.17zM529.9 284.8h6.03v3.17h-6.03zM561.43 284.8h3.17v3.17h-3.17zM627.36 284.8h6.03v3.17h-6.03zM658.9 284.8h3.17v3.17h-3.17zM535.64 287.67h3.17v3.17h-3.17zM558.57 287.67h3.17v3.17h-3.17zM521.3 290.54h3.17v3.17h-3.17zM535.64 290.54h3.17v3.17h-3.17zM555.7 290.54h3.17v3.17h-3.17zM633.1 290.54h3.17v3.17h-3.17zM638.83 290.54h6.03v3.17h-6.03zM524.17 293.4h3.17v3.17h-3.17zM532.77 293.4h3.17v3.17h-3.17zM541.37 293.4h3.17v3.17h-3.17zM627.36 293.4h14.63v3.17h-14.63zM527.04 296.27h8.9v3.17h-8.9zM604.43 296.27h6.03v3.17h-6.03zM624.5 296.27h3.17v3.17h-3.17zM635.96 296.27h6.03v3.17h-6.03zM529.9 299.14h6.03v3.17h-6.03zM624.5 299.14h3.17v3.17h-3.17zM633.1 299.14h8.9v3.17h-8.9zM613.03 302h3.17v3.17h-3.17zM627.36 302h3.17v3.17h-3.17zM635.96 302h6.03v3.17h-6.03zM615.9 304.87h8.9v3.17h-8.9zM532.77 307.74h3.17v3.17h-3.17zM529.9 310.6h3.17v3.17h-3.17zM524.17 313.47h3.17v3.17h-3.17zM512.7 316.34h11.77v3.17h-11.77zM509.84 319.2h3.17v3.17h-3.17zM489.77 322.07h6.03v3.17h-6.03zM638.83 322.07h3.17v3.17h-3.17zM495.5 324.94h6.03v3.17h-6.03zM506.97 324.94h3.17v3.17h-3.17zM635.96 324.94h8.9v3.17h-8.9zM492.64 327.8h3.17v3.17h-3.17zM635.96 327.8h6.03v3.17h-6.03zM635.96 330.67h6.03v3.17h-6.03zM495.5 333.53h3.17v3.17h-3.17zM635.96 333.53h3.17v3.17h-3.17zM506.97 336.4h8.9v3.17h-8.9zM506.97 339.27h8.9v3.17h-8.9zM506.97 342.13h6.03v3.17h-6.03zM638.83 342.13h3.17v3.17h-3.17zM638.83 345h3.17v3.17h-3.17zM495.5 347.87h3.17v3.17h-3.17zM638.83 347.87h3.17v3.17h-3.17zM498.37 350.73h8.9v3.17h-8.9zM641.7 350.73h3.17v3.17h-3.17zM504.1 353.6h3.17v3.17h-3.17zM644.56 353.6h3.17v3.17h-3.17zM506.97 356.47h3.17v3.17h-3.17zM647.43 356.47h6.03v3.17h-6.03zM501.24 359.33h8.9v3.17h-8.9zM501.24 362.2h3.17v3.17h-3.17zM501.24 365.07h3.17v3.17h-3.17zM498.37 367.93h11.77v3.17h-11.77zM506.97 376.53h3.17v3.17h-3.17zM627.36 376.53h6.03v3.17h-6.03zM509.84 379.4h3.17v3.17h-3.17zM624.5 379.4h8.9v3.17h-8.9zM624.5 382.27h6.03v3.17h-6.03zM512.7 385.13h3.17v3.17h-3.17zM638.83 385.13h3.17v3.17h-3.17zM512.7 388h3.17v3.17h-3.17zM635.96 388h6.03v3.17h-6.03zM512.7 390.86h3.17v3.17h-3.17zM635.96 390.86h3.17v3.17h-3.17zM509.84 393.73h3.17v3.17h-3.17zM635.96 393.73h3.17v3.17h-3.17zM647.43 393.73h6.03v3.17h-6.03zM638.83 396.6h8.9v3.17h-8.9zM509.84 399.46h3.17v3.17h-3.17zM638.83 399.46h3.17v3.17h-3.17zM512.7 402.33h3.17v3.17h-3.17zM633.1 402.33h8.9v3.17h-8.9zM492.64 405.2h8.9v3.17h-8.9zM529.9 405.2h3.17v3.17h-3.17zM627.36 405.2h8.9v3.17h-8.9zM532.77 408.06h6.03v3.17h-6.03zM627.36 408.06h6.03v3.17h-6.03zM492.64 410.93h3.17v3.17h-3.17zM498.37 410.93h3.17v3.17h-3.17zM538.5 410.93h3.17v3.17h-3.17zM627.36 410.93h3.17v3.17h-3.17zM621.63 413.8h8.9v3.17h-8.9zM532.77 416.66h3.17v3.17h-3.17zM607.3 416.66h23.23v3.17h-23.23zM544.24 419.53h3.17v3.17h-3.17zM564.3 419.53h3.17v3.17h-3.17zM592.97 419.53h17.5v3.17h-17.5zM538.5 422.4h3.17v3.17h-3.17zM547.1 422.4h3.17v3.17h-3.17zM555.7 422.4h6.03v3.17h-6.03zM567.17 422.4h3.17v3.17h-3.17zM590.1 422.4h20.37v3.17h-20.37zM549.97 425.26h3.17v3.17h-3.17zM555.7 425.26h6.03v3.17h-6.03zM570.03 425.26h3.17v3.17h-3.17zM587.23 425.26h3.17v3.17h-3.17zM598.7 425.26h8.9v3.17h-8.9zM633.1 425.26h3.17v3.17h-3.17zM549.97 428.13h3.17v3.17h-3.17zM555.7 428.13h6.03v3.17h-6.03zM584.37 428.13h8.9v3.17h-8.9zM598.7 428.13h6.03v3.17h-6.03zM633.1 428.13h6.03v3.17h-6.03zM547.1 431h14.63v3.17h-14.63zM567.17 431h11.77v3.17h-11.77zM584.37 431h17.5v3.17h-17.5zM635.96 431h3.17v3.17h-3.17zM558.57 433.86h3.17v3.17h-3.17zM567.17 433.86h14.63v3.17h-14.63zM584.37 433.86h17.5v3.17h-17.5zM638.83 433.86h3.17v3.17h-3.17zM558.57 436.73h6.03v3.17h-6.03zM578.63 436.73h3.17v3.17h-3.17zM587.23 436.73h6.03v3.17h-6.03zM598.7 436.73h6.03v3.17h-6.03zM638.83 436.73h6.03v3.17h-6.03zM561.43 439.6h3.17v3.17h-3.17zM581.5 439.6h11.77v3.17h-11.77zM641.7 439.6h3.17v3.17h-3.17zM558.57 442.46h3.17v3.17h-3.17zM590.1 442.46h6.03v3.17h-6.03zM656.03 442.46h3.17v3.17h-3.17zM555.7 445.33h6.03v3.17h-6.03zM592.97 445.33h8.9v3.17h-8.9zM656.03 445.33h3.17v3.17h-3.17zM656.03 448.19h3.17v3.17h-3.17zM770.69 600.12h3.17v3.17h-3.17zM770.69 602.99h3.17v3.17h-3.17zM776.42 602.99h3.17v3.17h-3.17zM773.56 605.85h6.03v3.17h-6.03zM776.42 608.72h6.03v3.17h-6.03zM779.29 611.59h6.03v3.17h-6.03zM782.15 614.45h6.03v3.17h-6.03zM813.69 663.18h11.77v3.17h-11.77zM813.69 666.05h3.17v3.17h-3.17zM825.15 666.05h3.17v3.17h-3.17zM816.55 668.92h3.17v3.17h-3.17zM825.15 668.92h3.17v3.17h-3.17zM819.42 671.78h8.9v3.17h-8.9z"/><path fill="#4c5682" d="M366.51 92.75h6.03v3.17h-6.03zM369.38 95.62h3.17v3.17h-3.17zM572.9 261.87h6.03v3.17h-6.03zM584.37 261.87h3.17v3.17h-3.17zM578.63 264.74h3.17v3.17h-3.17zM572.9 267.61h6.03v3.17h-6.03zM524.17 284.8h6.03v3.17h-6.03zM567.17 284.8h17.5v3.17h-17.5zM650.3 284.8h3.17v3.17h-3.17zM524.17 287.67h6.03v3.17h-6.03zM564.3 287.67h3.17v3.17h-3.17zM658.9 287.67h3.17v3.17h-3.17zM561.43 290.54h3.17v3.17h-3.17zM658.9 290.54h3.17v3.17h-3.17zM547.1 293.4h8.9v3.17h-8.9zM561.43 293.4h3.17v3.17h-3.17zM641.7 293.4h3.17v3.17h-3.17zM541.37 296.27h3.17v3.17h-3.17zM555.7 296.27h6.03v3.17h-6.03zM644.56 296.27h8.9v3.17h-8.9zM538.5 299.14h3.17v3.17h-3.17zM604.43 299.14h6.03v3.17h-6.03zM610.16 302h3.17v3.17h-3.17zM630.23 304.87h6.03v3.17h-6.03zM613.03 307.74h3.17v3.17h-3.17zM621.63 307.74h8.9v3.17h-8.9zM633.1 307.74h6.03v3.17h-6.03zM535.64 310.6h3.17v3.17h-3.17zM635.96 310.6h3.17v3.17h-3.17zM532.77 313.47h3.17v3.17h-3.17zM633.1 313.47h6.03v3.17h-6.03zM527.04 316.34h3.17v3.17h-3.17zM630.23 316.34h6.03v3.17h-6.03zM515.57 319.2h3.17v3.17h-3.17zM527.04 319.2h3.17v3.17h-3.17zM630.23 319.2h3.17v3.17h-3.17zM512.7 322.07h3.17v3.17h-3.17zM518.44 322.07h11.77v3.17h-11.77zM630.23 322.07h3.17v3.17h-3.17zM509.84 324.94h3.17v3.17h-3.17zM518.44 324.94h3.17v3.17h-3.17zM527.04 324.94h3.17v3.17h-3.17zM630.23 324.94h3.17v3.17h-3.17zM509.84 327.8h11.77v3.17h-11.77zM527.04 327.8h3.17v3.17h-3.17zM630.23 327.8h3.17v3.17h-3.17zM512.7 330.67h14.63v3.17h-14.63zM630.23 330.67h3.17v3.17h-3.17zM498.37 333.53h6.03v3.17h-6.03zM518.44 333.53h6.03v3.17h-6.03zM498.37 336.4h6.03v3.17h-6.03zM518.44 336.4h3.17v3.17h-3.17zM633.1 336.4h3.17v3.17h-3.17zM498.37 339.27h6.03v3.17h-6.03zM515.57 339.27h3.17v3.17h-3.17zM498.37 342.13h6.03v3.17h-6.03zM498.37 345h6.03v3.17h-6.03zM635.96 345h3.17v3.17h-3.17zM509.84 347.87h3.17v3.17h-3.17zM635.96 347.87h3.17v3.17h-3.17zM638.83 353.6h3.17v3.17h-3.17zM509.84 356.47h3.17v3.17h-3.17zM641.7 356.47h3.17v3.17h-3.17zM512.7 359.33h3.17v3.17h-3.17zM515.57 362.2h3.17v3.17h-3.17zM644.56 362.2h3.17v3.17h-3.17zM515.57 365.07h3.17v3.17h-3.17zM641.7 365.07h3.17v3.17h-3.17zM509.84 370.8h6.03v3.17h-6.03zM635.96 370.8h6.03v3.17h-6.03zM509.84 373.67h3.17v3.17h-3.17zM624.5 373.67h3.17v3.17h-3.17zM635.96 373.67h3.17v3.17h-3.17zM621.63 376.53h3.17v3.17h-3.17zM635.96 376.53h3.17v3.17h-3.17zM512.7 379.4h3.17v3.17h-3.17zM635.96 379.4h3.17v3.17h-3.17zM635.96 382.27h3.17v3.17h-3.17zM621.63 385.13h3.17v3.17h-3.17zM515.57 388h3.17v3.17h-3.17zM621.63 388h6.03v3.17h-6.03zM515.57 390.86h3.17v3.17h-3.17zM515.57 393.73h3.17v3.17h-3.17zM512.7 396.6h6.03v3.17h-6.03zM521.3 396.6h11.77v3.17h-11.77zM627.36 396.6h6.03v3.17h-6.03zM515.57 399.46h8.9v3.17h-8.9zM529.9 399.46h3.17v3.17h-3.17zM624.5 399.46h6.03v3.17h-6.03zM532.77 402.33h3.17v3.17h-3.17zM615.9 402.33h3.17v3.17h-3.17zM621.63 402.33h6.03v3.17h-6.03zM535.64 405.2h3.17v3.17h-3.17zM549.97 405.2h3.17v3.17h-3.17zM610.16 405.2h3.17v3.17h-3.17zM618.76 405.2h6.03v3.17h-6.03zM541.37 408.06h6.03v3.17h-6.03zM621.63 408.06h3.17v3.17h-3.17zM544.24 410.93h3.17v3.17h-3.17zM595.83 410.93h3.17v3.17h-3.17zM607.3 410.93h3.17v3.17h-3.17zM538.5 413.8h3.17v3.17h-3.17zM544.24 413.8h3.17v3.17h-3.17zM592.97 413.8h8.9v3.17h-8.9zM604.43 413.8h3.17v3.17h-3.17zM535.64 416.66h3.17v3.17h-3.17zM541.37 416.66h3.17v3.17h-3.17zM547.1 416.66h3.17v3.17h-3.17zM561.43 416.66h6.03v3.17h-6.03zM590.1 416.66h3.17v3.17h-3.17zM538.5 419.53h3.17v3.17h-3.17zM549.97 419.53h8.9v3.17h-8.9zM570.03 419.53h3.17v3.17h-3.17zM587.23 419.53h3.17v3.17h-3.17zM572.9 422.4h3.17v3.17h-3.17zM584.37 422.4h3.17v3.17h-3.17zM549.97 436.73h6.03v3.17h-6.03zM552.83 439.6h6.03v3.17h-6.03zM644.56 439.6h3.17v3.17h-3.17zM650.3 439.6h3.17v3.17h-3.17zM552.83 442.46h3.17v3.17h-3.17zM549.97 445.33h3.17v3.17h-3.17zM641.7 445.33h3.17v3.17h-3.17zM644.56 451.06h3.17v3.17h-3.17zM650.3 451.06h3.17v3.17h-3.17z"/><path fill="#495b89" d="M572.9 264.74h6.03v3.17h-6.03zM584.37 287.67h3.17v3.17h-3.17zM653.16 287.67h6.03v3.17h-6.03zM564.3 290.54h3.17v3.17h-3.17zM656.03 290.54h3.17v3.17h-3.17zM590.1 293.4h3.17v3.17h-3.17zM644.56 293.4h3.17v3.17h-3.17zM650.3 293.4h6.03v3.17h-6.03zM544.24 296.27h3.17v3.17h-3.17zM549.97 296.27h6.03v3.17h-6.03zM561.43 296.27h3.17v3.17h-3.17zM541.37 299.14h3.17v3.17h-3.17zM555.7 299.14h8.9v3.17h-8.9zM538.5 302h3.17v3.17h-3.17zM607.3 302h3.17v3.17h-3.17zM538.5 304.87h3.17v3.17h-3.17zM610.16 304.87h3.17v3.17h-3.17zM538.5 307.74h3.17v3.17h-3.17zM610.16 307.74h3.17v3.17h-3.17zM630.23 307.74h3.17v3.17h-3.17zM610.16 310.6h26.1v3.17h-26.1zM535.64 313.47h3.17v3.17h-3.17zM610.16 313.47h6.03v3.17h-6.03zM621.63 313.47h11.77v3.17h-11.77zM529.9 316.34h3.17v3.17h-3.17zM624.5 316.34h6.03v3.17h-6.03zM627.36 319.2h3.17v3.17h-3.17zM515.57 322.07h3.17v3.17h-3.17zM627.36 322.07h3.17v3.17h-3.17zM512.7 324.94h6.03v3.17h-6.03zM627.36 324.94h3.17v3.17h-3.17zM627.36 327.8h3.17v3.17h-3.17zM527.04 330.67h3.17v3.17h-3.17zM627.36 330.67h3.17v3.17h-3.17zM524.17 333.53h3.17v3.17h-3.17zM630.23 333.53h3.17v3.17h-3.17zM521.3 336.4h3.17v3.17h-3.17zM630.23 336.4h3.17v3.17h-3.17zM518.44 339.27h3.17v3.17h-3.17zM633.1 339.27h3.17v3.17h-3.17zM515.57 342.13h3.17v3.17h-3.17zM633.1 342.13h3.17v3.17h-3.17zM512.7 345h3.17v3.17h-3.17zM509.84 350.73h3.17v3.17h-3.17zM635.96 350.73h3.17v3.17h-3.17zM509.84 353.6h3.17v3.17h-3.17zM638.83 356.47h3.17v3.17h-3.17zM515.57 359.33h3.17v3.17h-3.17zM641.7 359.33h3.17v3.17h-3.17zM641.7 362.2h3.17v3.17h-3.17zM518.44 365.07h3.17v3.17h-3.17zM515.57 367.93h3.17v3.17h-3.17zM638.83 367.93h3.17v3.17h-3.17zM630.23 370.8h6.03v3.17h-6.03zM512.7 373.67h3.17v3.17h-3.17zM621.63 373.67h3.17v3.17h-3.17zM512.7 376.53h3.17v3.17h-3.17zM618.76 379.4h3.17v3.17h-3.17zM618.76 382.27h3.17v3.17h-3.17zM515.57 385.13h3.17v3.17h-3.17zM618.76 385.13h3.17v3.17h-3.17zM518.44 390.86h3.17v3.17h-3.17zM621.63 390.86h6.03v3.17h-6.03zM518.44 393.73h14.63v3.17h-14.63zM624.5 393.73h3.17v3.17h-3.17zM518.44 396.6h3.17v3.17h-3.17zM532.77 396.6h3.17v3.17h-3.17zM624.5 396.6h3.17v3.17h-3.17zM532.77 399.46h3.17v3.17h-3.17zM621.63 399.46h3.17v3.17h-3.17zM535.64 402.33h3.17v3.17h-3.17zM549.97 402.33h6.03v3.17h-6.03zM610.16 402.33h6.03v3.17h-6.03zM618.76 402.33h3.17v3.17h-3.17zM538.5 405.2h11.77v3.17h-11.77zM552.83 405.2h3.17v3.17h-3.17zM547.1 408.06h6.03v3.17h-6.03zM592.97 408.06h6.03v3.17h-6.03zM607.3 408.06h3.17v3.17h-3.17zM547.1 410.93h3.17v3.17h-3.17zM592.97 410.93h3.17v3.17h-3.17zM598.7 410.93h3.17v3.17h-3.17zM604.43 410.93h3.17v3.17h-3.17zM547.1 413.8h3.17v3.17h-3.17zM590.1 413.8h3.17v3.17h-3.17zM601.57 413.8h3.17v3.17h-3.17zM538.5 416.66h3.17v3.17h-3.17zM549.97 416.66h11.77v3.17h-11.77zM567.17 416.66h3.17v3.17h-3.17zM587.23 416.66h3.17v3.17h-3.17zM572.9 419.53h3.17v3.17h-3.17zM584.37 419.53h3.17v3.17h-3.17zM575.77 422.4h8.9v3.17h-8.9zM549.97 439.6h3.17v3.17h-3.17zM647.43 439.6h3.17v3.17h-3.17zM549.97 442.46h3.17v3.17h-3.17zM653.16 442.46h3.17v3.17h-3.17zM653.16 445.33h3.17v3.17h-3.17zM653.16 448.19h3.17v3.17h-3.17zM647.43 451.06h3.17v3.17h-3.17z"/><path fill="#44638f" d="M567.17 287.67h17.5v3.17h-17.5zM647.43 287.67h6.03v3.17h-6.03zM587.23 290.54h3.17v3.17h-3.17zM644.56 290.54h11.77v3.17h-11.77zM564.3 293.4h3.17v3.17h-3.17zM647.43 293.4h3.17v3.17h-3.17zM547.1 296.27h3.17v3.17h-3.17zM564.3 296.27h3.17v3.17h-3.17zM544.24 299.14h3.17v3.17h-3.17zM552.83 299.14h3.17v3.17h-3.17zM564.3 299.14h3.17v3.17h-3.17zM592.97 299.14h3.17v3.17h-3.17zM541.37 302h3.17v3.17h-3.17zM555.7 302h8.9v3.17h-8.9zM595.83 302h11.77v3.17h-11.77zM604.43 304.87h6.03v3.17h-6.03zM607.3 307.74h3.17v3.17h-3.17zM538.5 310.6h3.17v3.17h-3.17zM607.3 310.6h3.17v3.17h-3.17zM607.3 313.47h3.17v3.17h-3.17zM615.9 313.47h6.03v3.17h-6.03zM532.77 316.34h3.17v3.17h-3.17zM610.16 316.34h14.63v3.17h-14.63zM529.9 319.2h3.17v3.17h-3.17zM618.76 319.2h8.9v3.17h-8.9zM529.9 322.07h3.17v3.17h-3.17zM621.63 322.07h6.03v3.17h-6.03zM529.9 324.94h3.17v3.17h-3.17zM621.63 324.94h6.03v3.17h-6.03zM529.9 327.8h3.17v3.17h-3.17zM624.5 327.8h3.17v3.17h-3.17zM624.5 330.67h3.17v3.17h-3.17zM627.36 333.53h3.17v3.17h-3.17zM630.23 339.27h3.17v3.17h-3.17zM633.1 345h3.17v3.17h-3.17zM512.7 347.87h3.17v3.17h-3.17zM633.1 347.87h3.17v3.17h-3.17zM635.96 353.6h3.17v3.17h-3.17zM512.7 356.47h3.17v3.17h-3.17zM638.83 359.33h3.17v3.17h-3.17zM518.44 362.2h3.17v3.17h-3.17zM638.83 362.2h3.17v3.17h-3.17zM638.83 365.07h3.17v3.17h-3.17zM518.44 367.93h3.17v3.17h-3.17zM633.1 367.93h6.03v3.17h-6.03zM515.57 370.8h3.17v3.17h-3.17zM627.36 370.8h3.17v3.17h-3.17zM618.76 376.53h3.17v3.17h-3.17zM515.57 382.27h3.17v3.17h-3.17zM518.44 388h3.17v3.17h-3.17zM618.76 388h3.17v3.17h-3.17zM521.3 390.86h14.63v3.17h-14.63zM618.76 390.86h3.17v3.17h-3.17zM532.77 393.73h3.17v3.17h-3.17zM621.63 393.73h3.17v3.17h-3.17zM618.76 396.6h6.03v3.17h-6.03zM535.64 399.46h3.17v3.17h-3.17zM549.97 399.46h6.03v3.17h-6.03zM613.03 399.46h8.9v3.17h-8.9zM547.1 402.33h3.17v3.17h-3.17zM555.7 402.33h3.17v3.17h-3.17zM555.7 405.2h3.17v3.17h-3.17zM607.3 405.2h3.17v3.17h-3.17zM552.83 408.06h3.17v3.17h-3.17zM598.7 408.06h8.9v3.17h-8.9zM549.97 410.93h3.17v3.17h-3.17zM590.1 410.93h3.17v3.17h-3.17zM601.57 410.93h3.17v3.17h-3.17zM549.97 413.8h6.03v3.17h-6.03zM587.23 413.8h3.17v3.17h-3.17zM570.03 416.66h6.03v3.17h-6.03zM584.37 416.66h3.17v3.17h-3.17zM575.77 419.53h8.9v3.17h-8.9zM644.56 442.46h3.17v3.17h-3.17zM650.3 442.46h3.17v3.17h-3.17zM644.56 445.33h3.17v3.17h-3.17zM644.56 448.19h3.17v3.17h-3.17zM650.3 448.19h3.17v3.17h-3.17z"/><path fill="#406a96" d="M567.17 290.54h3.17v3.17h-3.17zM575.77 290.54h11.77v3.17h-11.77zM587.23 293.4h3.17v3.17h-3.17zM590.1 296.27h3.17v3.17h-3.17zM547.1 299.14h6.03v3.17h-6.03zM590.1 299.14h3.17v3.17h-3.17zM592.97 302h3.17v3.17h-3.17zM541.37 304.87h3.17v3.17h-3.17zM598.7 304.87h6.03v3.17h-6.03zM541.37 307.74h3.17v3.17h-3.17zM604.43 307.74h3.17v3.17h-3.17zM541.37 310.6h3.17v3.17h-3.17zM604.43 310.6h3.17v3.17h-3.17zM538.5 313.47h3.17v3.17h-3.17zM604.43 313.47h3.17v3.17h-3.17zM535.64 316.34h3.17v3.17h-3.17zM607.3 316.34h3.17v3.17h-3.17zM532.77 319.2h3.17v3.17h-3.17zM610.16 319.2h8.9v3.17h-8.9zM615.9 322.07h6.03v3.17h-6.03zM618.76 324.94h3.17v3.17h-3.17zM618.76 327.8h6.03v3.17h-6.03zM529.9 330.67h3.17v3.17h-3.17zM621.63 330.67h3.17v3.17h-3.17zM527.04 333.53h3.17v3.17h-3.17zM624.5 333.53h3.17v3.17h-3.17zM524.17 336.4h3.17v3.17h-3.17zM627.36 336.4h3.17v3.17h-3.17zM521.3 339.27h3.17v3.17h-3.17zM518.44 342.13h3.17v3.17h-3.17zM630.23 342.13h3.17v3.17h-3.17zM515.57 345h3.17v3.17h-3.17zM512.7 350.73h3.17v3.17h-3.17zM633.1 350.73h3.17v3.17h-3.17zM512.7 353.6h3.17v3.17h-3.17zM515.57 356.47h3.17v3.17h-3.17zM635.96 356.47h3.17v3.17h-3.17zM518.44 359.33h3.17v3.17h-3.17zM635.96 365.07h3.17v3.17h-3.17zM630.23 367.93h3.17v3.17h-3.17zM518.44 370.8h3.17v3.17h-3.17zM621.63 370.8h6.03v3.17h-6.03zM515.57 373.67h3.17v3.17h-3.17zM618.76 373.67h3.17v3.17h-3.17zM515.57 376.53h3.17v3.17h-3.17zM515.57 379.4h3.17v3.17h-3.17zM615.9 379.4h3.17v3.17h-3.17zM615.9 382.27h3.17v3.17h-3.17zM518.44 385.13h3.17v3.17h-3.17zM615.9 385.13h3.17v3.17h-3.17zM521.3 388h3.17v3.17h-3.17zM527.04 388h8.9v3.17h-8.9zM615.9 388h3.17v3.17h-3.17zM535.64 390.86h3.17v3.17h-3.17zM615.9 390.86h3.17v3.17h-3.17zM535.64 393.73h3.17v3.17h-3.17zM615.9 393.73h6.03v3.17h-6.03zM535.64 396.6h3.17v3.17h-3.17zM613.03 396.6h6.03v3.17h-6.03zM547.1 399.46h3.17v3.17h-3.17zM555.7 399.46h3.17v3.17h-3.17zM610.16 399.46h3.17v3.17h-3.17zM538.5 402.33h8.9v3.17h-8.9zM607.3 402.33h3.17v3.17h-3.17zM592.97 405.2h14.63v3.17h-14.63zM555.7 408.06h3.17v3.17h-3.17zM590.1 408.06h3.17v3.17h-3.17zM552.83 410.93h6.03v3.17h-6.03zM587.23 410.93h3.17v3.17h-3.17zM555.7 413.8h17.5v3.17h-17.5zM584.37 413.8h3.17v3.17h-3.17zM575.77 416.66h8.9v3.17h-8.9zM647.43 442.46h3.17v3.17h-3.17zM647.43 445.33h6.03v3.17h-6.03zM647.43 448.19h3.17v3.17h-3.17z"/><path fill="#3b739b" d="M570.03 290.54h6.03v3.17h-6.03zM567.17 293.4h14.63v3.17h-14.63zM584.37 293.4h3.17v3.17h-3.17zM567.17 296.27h8.9v3.17h-8.9zM587.23 296.27h3.17v3.17h-3.17zM567.17 299.14h3.17v3.17h-3.17zM544.24 302h11.77v3.17h-11.77zM564.3 302h3.17v3.17h-3.17zM590.1 302h3.17v3.17h-3.17zM555.7 304.87h8.9v3.17h-8.9zM592.97 304.87h6.03v3.17h-6.03zM601.57 307.74h3.17v3.17h-3.17zM541.37 313.47h3.17v3.17h-3.17zM538.5 316.34h3.17v3.17h-3.17zM604.43 316.34h3.17v3.17h-3.17zM535.64 319.2h3.17v3.17h-3.17zM607.3 319.2h3.17v3.17h-3.17zM532.77 322.07h3.17v3.17h-3.17zM613.03 322.07h3.17v3.17h-3.17zM532.77 324.94h3.17v3.17h-3.17zM615.9 324.94h3.17v3.17h-3.17zM615.9 327.8h3.17v3.17h-3.17zM618.76 330.67h3.17v3.17h-3.17zM529.9 333.53h3.17v3.17h-3.17zM527.04 336.4h3.17v3.17h-3.17zM524.17 339.27h3.17v3.17h-3.17zM627.36 339.27h3.17v3.17h-3.17zM630.23 345h3.17v3.17h-3.17zM515.57 347.87h3.17v3.17h-3.17zM630.23 347.87h3.17v3.17h-3.17zM515.57 353.6h3.17v3.17h-3.17zM633.1 353.6h3.17v3.17h-3.17zM518.44 356.47h3.17v3.17h-3.17zM635.96 359.33h3.17v3.17h-3.17zM521.3 362.2h3.17v3.17h-3.17zM635.96 362.2h3.17v3.17h-3.17zM521.3 365.07h3.17v3.17h-3.17zM633.1 365.07h3.17v3.17h-3.17zM627.36 367.93h3.17v3.17h-3.17zM615.9 373.67h3.17v3.17h-3.17zM615.9 376.53h3.17v3.17h-3.17zM613.03 385.13h3.17v3.17h-3.17zM524.17 388h3.17v3.17h-3.17zM535.64 388h3.17v3.17h-3.17zM613.03 388h3.17v3.17h-3.17zM538.5 390.86h3.17v3.17h-3.17zM613.03 390.86h3.17v3.17h-3.17zM613.03 393.73h3.17v3.17h-3.17zM538.5 396.6h3.17v3.17h-3.17zM549.97 396.6h6.03v3.17h-6.03zM610.16 396.6h3.17v3.17h-3.17zM538.5 399.46h3.17v3.17h-3.17zM544.24 399.46h3.17v3.17h-3.17zM607.3 399.46h3.17v3.17h-3.17zM558.57 402.33h3.17v3.17h-3.17zM601.57 402.33h6.03v3.17h-6.03zM558.57 405.2h3.17v3.17h-3.17zM558.57 408.06h3.17v3.17h-3.17zM558.57 410.93h6.03v3.17h-6.03zM584.37 410.93h3.17v3.17h-3.17zM572.9 413.8h11.77v3.17h-11.77z"/><path fill="#367c9d" d="M581.5 293.4h3.17v3.17h-3.17zM575.77 296.27h6.03v3.17h-6.03zM570.03 299.14h8.9v3.17h-8.9zM587.23 299.14h3.17v3.17h-3.17zM567.17 302h3.17v3.17h-3.17zM587.23 302h3.17v3.17h-3.17zM544.24 304.87h3.17v3.17h-3.17zM552.83 304.87h3.17v3.17h-3.17zM564.3 304.87h3.17v3.17h-3.17zM590.1 304.87h3.17v3.17h-3.17zM544.24 307.74h3.17v3.17h-3.17zM598.7 307.74h3.17v3.17h-3.17zM601.57 310.6h3.17v3.17h-3.17zM601.57 313.47h3.17v3.17h-3.17zM610.16 322.07h3.17v3.17h-3.17zM613.03 324.94h3.17v3.17h-3.17zM532.77 327.8h3.17v3.17h-3.17zM532.77 330.67h3.17v3.17h-3.17zM615.9 330.67h3.17v3.17h-3.17zM621.63 333.53h3.17v3.17h-3.17zM624.5 336.4h3.17v3.17h-3.17zM521.3 342.13h3.17v3.17h-3.17zM627.36 342.13h3.17v3.17h-3.17zM518.44 345h3.17v3.17h-3.17zM515.57 350.73h3.17v3.17h-3.17zM630.23 350.73h3.17v3.17h-3.17zM633.1 356.47h3.17v3.17h-3.17zM521.3 359.33h3.17v3.17h-3.17zM633.1 362.2h3.17v3.17h-3.17zM630.23 365.07h3.17v3.17h-3.17zM521.3 367.93h3.17v3.17h-3.17zM624.5 367.93h3.17v3.17h-3.17zM615.9 370.8h6.03v3.17h-6.03zM518.44 373.67h3.17v3.17h-3.17zM613.03 376.53h3.17v3.17h-3.17zM613.03 379.4h3.17v3.17h-3.17zM518.44 382.27h3.17v3.17h-3.17zM613.03 382.27h3.17v3.17h-3.17zM521.3 385.13h3.17v3.17h-3.17zM529.9 385.13h8.9v3.17h-8.9zM610.16 385.13h3.17v3.17h-3.17zM538.5 388h3.17v3.17h-3.17zM610.16 388h3.17v3.17h-3.17zM610.16 390.86h3.17v3.17h-3.17zM538.5 393.73h3.17v3.17h-3.17zM607.3 393.73h6.03v3.17h-6.03zM547.1 396.6h3.17v3.17h-3.17zM555.7 396.6h3.17v3.17h-3.17zM607.3 396.6h3.17v3.17h-3.17zM541.37 399.46h3.17v3.17h-3.17zM558.57 399.46h3.17v3.17h-3.17zM604.43 399.46h3.17v3.17h-3.17zM595.83 402.33h6.03v3.17h-6.03zM590.1 405.2h3.17v3.17h-3.17zM561.43 408.06h3.17v3.17h-3.17zM587.23 408.06h3.17v3.17h-3.17zM564.3 410.93h20.37v3.17h-20.37z"/><path fill="#31869f" d="M581.5 296.27h6.03v3.17h-6.03zM578.63 299.14h8.9v3.17h-8.9zM570.03 302h8.9v3.17h-8.9zM584.37 302h3.17v3.17h-3.17zM547.1 304.87h6.03v3.17h-6.03zM587.23 304.87h3.17v3.17h-3.17zM555.7 307.74h8.9v3.17h-8.9zM592.97 307.74h6.03v3.17h-6.03zM544.24 310.6h3.17v3.17h-3.17zM598.7 310.6h3.17v3.17h-3.17zM544.24 313.47h3.17v3.17h-3.17zM541.37 316.34h3.17v3.17h-3.17zM601.57 316.34h3.17v3.17h-3.17zM538.5 319.2h3.17v3.17h-3.17zM604.43 319.2h3.17v3.17h-3.17zM535.64 322.07h3.17v3.17h-3.17zM607.3 322.07h3.17v3.17h-3.17zM610.16 324.94h3.17v3.17h-3.17zM613.03 327.8h3.17v3.17h-3.17zM532.77 333.53h3.17v3.17h-3.17zM618.76 333.53h3.17v3.17h-3.17zM529.9 336.4h3.17v3.17h-3.17zM621.63 336.4h3.17v3.17h-3.17zM527.04 339.27h3.17v3.17h-3.17zM624.5 339.27h3.17v3.17h-3.17zM524.17 342.13h3.17v3.17h-3.17zM521.3 345h3.17v3.17h-3.17zM627.36 345h3.17v3.17h-3.17zM518.44 347.87h3.17v3.17h-3.17zM627.36 347.87h3.17v3.17h-3.17zM518.44 350.73h3.17v3.17h-3.17zM518.44 353.6h3.17v3.17h-3.17zM630.23 353.6h3.17v3.17h-3.17zM521.3 356.47h3.17v3.17h-3.17zM633.1 359.33h3.17v3.17h-3.17zM627.36 365.07h3.17v3.17h-3.17zM621.63 367.93h3.17v3.17h-3.17zM521.3 370.8h3.17v3.17h-3.17zM613.03 373.67h3.17v3.17h-3.17zM518.44 376.53h3.17v3.17h-3.17zM518.44 379.4h3.17v3.17h-3.17zM610.16 379.4h3.17v3.17h-3.17zM607.3 382.27h6.03v3.17h-6.03zM524.17 385.13h6.03v3.17h-6.03zM538.5 385.13h3.17v3.17h-3.17zM604.43 385.13h6.03v3.17h-6.03zM541.37 388h3.17v3.17h-3.17zM604.43 388h6.03v3.17h-6.03zM541.37 390.86h3.17v3.17h-3.17zM607.3 390.86h3.17v3.17h-3.17zM541.37 393.73h3.17v3.17h-3.17zM604.43 393.73h3.17v3.17h-3.17zM541.37 396.6h6.03v3.17h-6.03zM558.57 396.6h3.17v3.17h-3.17zM604.43 396.6h3.17v3.17h-3.17zM598.7 399.46h6.03v3.17h-6.03zM561.43 402.33h3.17v3.17h-3.17zM592.97 402.33h3.17v3.17h-3.17zM561.43 405.2h3.17v3.17h-3.17zM564.3 408.06h3.17v3.17h-3.17zM584.37 408.06h3.17v3.17h-3.17z"/><path fill="#2e8f9e" d="M578.63 302h6.03v3.17h-6.03zM567.17 304.87h6.03v3.17h-6.03zM581.5 304.87h6.03v3.17h-6.03zM547.1 307.74h8.9v3.17h-8.9zM564.3 307.74h3.17v3.17h-3.17zM587.23 307.74h6.03v3.17h-6.03zM547.1 310.6h3.17v3.17h-3.17zM555.7 310.6h6.03v3.17h-6.03zM598.7 313.47h3.17v3.17h-3.17zM544.24 316.34h3.17v3.17h-3.17zM535.64 324.94h3.17v3.17h-3.17zM535.64 327.8h3.17v3.17h-3.17zM613.03 330.67h3.17v3.17h-3.17zM615.9 333.53h3.17v3.17h-3.17zM618.76 336.4h3.17v3.17h-3.17zM621.63 339.27h3.17v3.17h-3.17zM624.5 342.13h3.17v3.17h-3.17zM524.17 345h3.17v3.17h-3.17zM624.5 345h3.17v3.17h-3.17zM521.3 347.87h3.17v3.17h-3.17zM521.3 350.73h3.17v3.17h-3.17zM627.36 350.73h3.17v3.17h-3.17zM521.3 353.6h6.03v3.17h-6.03zM524.17 356.47h3.17v3.17h-3.17zM630.23 356.47h3.17v3.17h-3.17zM524.17 359.33h3.17v3.17h-3.17zM630.23 359.33h3.17v3.17h-3.17zM524.17 362.2h3.17v3.17h-3.17zM630.23 362.2h3.17v3.17h-3.17zM524.17 365.07h3.17v3.17h-3.17zM624.5 365.07h3.17v3.17h-3.17zM524.17 367.93h3.17v3.17h-3.17zM615.9 367.93h6.03v3.17h-6.03zM613.03 370.8h3.17v3.17h-3.17zM521.3 373.67h3.17v3.17h-3.17zM610.16 373.67h3.17v3.17h-3.17zM610.16 376.53h3.17v3.17h-3.17zM607.3 379.4h3.17v3.17h-3.17zM521.3 382.27h3.17v3.17h-3.17zM529.9 382.27h8.9v3.17h-8.9zM604.43 382.27h3.17v3.17h-3.17zM541.37 385.13h3.17v3.17h-3.17zM601.57 388h3.17v3.17h-3.17zM544.24 390.86h3.17v3.17h-3.17zM604.43 390.86h3.17v3.17h-3.17zM544.24 393.73h17.5v3.17h-17.5zM601.57 393.73h3.17v3.17h-3.17zM601.57 396.6h3.17v3.17h-3.17zM595.83 399.46h3.17v3.17h-3.17zM590.1 402.33h3.17v3.17h-3.17zM564.3 405.2h3.17v3.17h-3.17zM587.23 405.2h3.17v3.17h-3.17zM567.17 408.06h17.5v3.17h-17.5z"/><path fill="#2a999c" d="M572.9 304.87h8.9v3.17h-8.9zM567.17 307.74h3.17v3.17h-3.17zM581.5 307.74h6.03v3.17h-6.03zM549.97 310.6h6.03v3.17h-6.03zM561.43 310.6h3.17v3.17h-3.17zM592.97 310.6h6.03v3.17h-6.03zM547.1 313.47h8.9v3.17h-8.9zM547.1 316.34h3.17v3.17h-3.17zM598.7 316.34h3.17v3.17h-3.17zM541.37 319.2h6.03v3.17h-6.03zM601.57 319.2h3.17v3.17h-3.17zM538.5 322.07h3.17v3.17h-3.17zM604.43 322.07h3.17v3.17h-3.17zM607.3 324.94h3.17v3.17h-3.17zM610.16 327.8h3.17v3.17h-3.17zM535.64 330.67h3.17v3.17h-3.17zM532.77 336.4h3.17v3.17h-3.17zM529.9 339.27h3.17v3.17h-3.17zM527.04 342.13h3.17v3.17h-3.17zM524.17 347.87h3.17v3.17h-3.17zM624.5 347.87h3.17v3.17h-3.17zM524.17 350.73h3.17v3.17h-3.17zM624.5 350.73h3.17v3.17h-3.17zM627.36 353.6h3.17v3.17h-3.17zM627.36 356.47h3.17v3.17h-3.17zM627.36 359.33h3.17v3.17h-3.17zM627.36 362.2h3.17v3.17h-3.17zM618.76 365.07h6.03v3.17h-6.03zM613.03 367.93h3.17v3.17h-3.17zM524.17 370.8h3.17v3.17h-3.17zM610.16 370.8h3.17v3.17h-3.17zM524.17 373.67h3.17v3.17h-3.17zM521.3 376.53h3.17v3.17h-3.17zM607.3 376.53h3.17v3.17h-3.17zM521.3 379.4h3.17v3.17h-3.17zM532.77 379.4h3.17v3.17h-3.17zM604.43 379.4h3.17v3.17h-3.17zM524.17 382.27h6.03v3.17h-6.03zM538.5 382.27h3.17v3.17h-3.17zM601.57 385.13h3.17v3.17h-3.17zM544.24 388h3.17v3.17h-3.17zM547.1 390.86h3.17v3.17h-3.17zM555.7 390.86h6.03v3.17h-6.03zM601.57 390.86h3.17v3.17h-3.17zM561.43 396.6h3.17v3.17h-3.17zM598.7 396.6h3.17v3.17h-3.17zM561.43 399.46h3.17v3.17h-3.17zM592.97 399.46h3.17v3.17h-3.17zM564.3 402.33h3.17v3.17h-3.17zM584.37 405.2h3.17v3.17h-3.17z"/><path fill="#27a198" d="M570.03 307.74h11.77v3.17h-11.77zM564.3 310.6h3.17v3.17h-3.17zM581.5 310.6h11.77v3.17h-11.77zM555.7 313.47h6.03v3.17h-6.03zM595.83 313.47h3.17v3.17h-3.17zM549.97 316.34h6.03v3.17h-6.03zM547.1 319.2h3.17v3.17h-3.17zM598.7 319.2h3.17v3.17h-3.17zM541.37 322.07h3.17v3.17h-3.17zM601.57 322.07h3.17v3.17h-3.17zM538.5 324.94h3.17v3.17h-3.17zM604.43 324.94h3.17v3.17h-3.17zM607.3 327.8h3.17v3.17h-3.17zM610.16 330.67h3.17v3.17h-3.17zM535.64 333.53h3.17v3.17h-3.17zM613.03 333.53h3.17v3.17h-3.17zM615.9 336.4h3.17v3.17h-3.17zM618.76 339.27h3.17v3.17h-3.17zM621.63 342.13h3.17v3.17h-3.17zM527.04 345h3.17v3.17h-3.17zM621.63 345h3.17v3.17h-3.17zM527.04 347.87h3.17v3.17h-3.17zM621.63 347.87h3.17v3.17h-3.17zM527.04 350.73h3.17v3.17h-3.17zM621.63 350.73h3.17v3.17h-3.17zM527.04 353.6h3.17v3.17h-3.17zM621.63 353.6h6.03v3.17h-6.03zM527.04 356.47h3.17v3.17h-3.17zM624.5 356.47h3.17v3.17h-3.17zM527.04 359.33h3.17v3.17h-3.17zM624.5 359.33h3.17v3.17h-3.17zM527.04 362.2h3.17v3.17h-3.17zM624.5 362.2h3.17v3.17h-3.17zM527.04 365.07h3.17v3.17h-3.17zM615.9 365.07h3.17v3.17h-3.17zM527.04 367.93h3.17v3.17h-3.17zM610.16 367.93h3.17v3.17h-3.17zM527.04 370.8h3.17v3.17h-3.17zM527.04 373.67h3.17v3.17h-3.17zM607.3 373.67h3.17v3.17h-3.17zM524.17 376.53h3.17v3.17h-3.17zM529.9 376.53h6.03v3.17h-6.03zM524.17 379.4h8.9v3.17h-8.9zM535.64 379.4h6.03v3.17h-6.03zM541.37 382.27h3.17v3.17h-3.17zM601.57 382.27h3.17v3.17h-3.17zM544.24 385.13h3.17v3.17h-3.17zM598.7 388h3.17v3.17h-3.17zM549.97 390.86h6.03v3.17h-6.03zM561.43 390.86h3.17v3.17h-3.17zM598.7 390.86h3.17v3.17h-3.17zM561.43 393.73h3.17v3.17h-3.17zM598.7 393.73h3.17v3.17h-3.17zM595.83 396.6h3.17v3.17h-3.17zM587.23 402.33h3.17v3.17h-3.17zM567.17 405.2h17.5v3.17h-17.5z"/><path fill="#25a38f" d="M567.17 310.6h14.63v3.17h-14.63zM561.43 313.47h6.03v3.17h-6.03zM581.5 313.47h14.63v3.17h-14.63zM555.7 316.34h6.03v3.17h-6.03zM595.83 316.34h3.17v3.17h-3.17zM549.97 319.2h6.03v3.17h-6.03zM544.24 322.07h11.77v3.17h-11.77zM598.7 322.07h3.17v3.17h-3.17zM541.37 324.94h3.17v3.17h-3.17zM549.97 324.94h6.03v3.17h-6.03zM601.57 324.94h3.17v3.17h-3.17zM538.5 327.8h3.17v3.17h-3.17zM604.43 327.8h3.17v3.17h-3.17zM607.3 330.67h3.17v3.17h-3.17zM610.16 333.53h3.17v3.17h-3.17zM535.64 336.4h3.17v3.17h-3.17zM613.03 336.4h3.17v3.17h-3.17zM532.77 339.27h3.17v3.17h-3.17zM529.9 342.13h3.17v3.17h-3.17zM529.9 345h3.17v3.17h-3.17zM529.9 350.73h3.17v3.17h-3.17zM618.76 350.73h3.17v3.17h-3.17zM529.9 353.6h3.17v3.17h-3.17zM618.76 353.6h3.17v3.17h-3.17zM529.9 356.47h3.17v3.17h-3.17zM621.63 356.47h3.17v3.17h-3.17zM529.9 359.33h3.17v3.17h-3.17zM621.63 359.33h3.17v3.17h-3.17zM529.9 362.2h3.17v3.17h-3.17zM615.9 362.2h8.9v3.17h-8.9zM613.03 365.07h3.17v3.17h-3.17zM529.9 370.8h3.17v3.17h-3.17zM529.9 373.67h6.03v3.17h-6.03zM527.04 376.53h3.17v3.17h-3.17zM535.64 376.53h3.17v3.17h-3.17zM604.43 376.53h3.17v3.17h-3.17zM601.57 379.4h3.17v3.17h-3.17zM544.24 382.27h3.17v3.17h-3.17zM598.7 385.13h3.17v3.17h-3.17zM547.1 388h14.63v3.17h-14.63zM564.3 390.86h3.17v3.17h-3.17zM564.3 393.73h3.17v3.17h-3.17zM595.83 393.73h3.17v3.17h-3.17zM564.3 396.6h3.17v3.17h-3.17zM592.97 396.6h3.17v3.17h-3.17zM564.3 399.46h3.17v3.17h-3.17zM590.1 399.46h3.17v3.17h-3.17zM567.17 402.33h3.17v3.17h-3.17zM584.37 402.33h3.17v3.17h-3.17z"/><path fill="#22a686" d="M567.17 313.47h14.63v3.17h-14.63zM561.43 316.34h3.17v3.17h-3.17zM592.97 316.34h3.17v3.17h-3.17zM555.7 319.2h6.03v3.17h-6.03zM595.83 319.2h3.17v3.17h-3.17zM555.7 322.07h3.17v3.17h-3.17zM595.83 322.07h3.17v3.17h-3.17zM544.24 324.94h6.03v3.17h-6.03zM598.7 324.94h3.17v3.17h-3.17zM547.1 327.8h8.9v3.17h-8.9zM598.7 327.8h6.03v3.17h-6.03zM538.5 330.67h3.17v3.17h-3.17zM547.1 330.67h6.03v3.17h-6.03zM601.57 330.67h6.03v3.17h-6.03zM538.5 333.53h3.17v3.17h-3.17zM607.3 333.53h3.17v3.17h-3.17zM615.9 339.27h3.17v3.17h-3.17zM532.77 342.13h3.17v3.17h-3.17zM618.76 342.13h3.17v3.17h-3.17zM618.76 345h3.17v3.17h-3.17zM529.9 347.87h3.17v3.17h-3.17zM618.76 347.87h3.17v3.17h-3.17zM532.77 353.6h3.17v3.17h-3.17zM532.77 356.47h3.17v3.17h-3.17zM618.76 356.47h3.17v3.17h-3.17zM532.77 359.33h6.03v3.17h-6.03zM615.9 359.33h6.03v3.17h-6.03zM532.77 362.2h6.03v3.17h-6.03zM613.03 362.2h3.17v3.17h-3.17zM529.9 365.07h6.03v3.17h-6.03zM529.9 367.93h6.03v3.17h-6.03zM532.77 370.8h6.03v3.17h-6.03zM607.3 370.8h3.17v3.17h-3.17zM535.64 373.67h3.17v3.17h-3.17zM538.5 376.53h3.17v3.17h-3.17zM541.37 379.4h3.17v3.17h-3.17zM547.1 382.27h3.17v3.17h-3.17zM598.7 382.27h3.17v3.17h-3.17zM547.1 385.13h6.03v3.17h-6.03zM555.7 385.13h3.17v3.17h-3.17zM561.43 388h3.17v3.17h-3.17zM595.83 388h3.17v3.17h-3.17zM595.83 390.86h3.17v3.17h-3.17zM567.17 399.46h3.17v3.17h-3.17zM587.23 399.46h3.17v3.17h-3.17zM570.03 402.33h14.63v3.17h-14.63z"/><path fill="#20a97b" d="M564.3 316.34h28.96v3.17h-28.96zM590.1 319.2h6.03v3.17h-6.03zM558.57 322.07h3.17v3.17h-3.17zM592.97 322.07h3.17v3.17h-3.17zM555.7 324.94h3.17v3.17h-3.17zM595.83 324.94h3.17v3.17h-3.17zM541.37 327.8h6.03v3.17h-6.03zM541.37 330.67h6.03v3.17h-6.03zM541.37 333.53h8.9v3.17h-8.9zM604.43 333.53h3.17v3.17h-3.17zM538.5 336.4h3.17v3.17h-3.17zM607.3 336.4h6.03v3.17h-6.03zM535.64 339.27h3.17v3.17h-3.17zM613.03 339.27h3.17v3.17h-3.17zM615.9 342.13h3.17v3.17h-3.17zM532.77 345h3.17v3.17h-3.17zM615.9 345h3.17v3.17h-3.17zM615.9 347.87h3.17v3.17h-3.17zM532.77 350.73h3.17v3.17h-3.17zM615.9 350.73h3.17v3.17h-3.17zM615.9 353.6h3.17v3.17h-3.17zM535.64 356.47h3.17v3.17h-3.17zM615.9 356.47h3.17v3.17h-3.17zM538.5 362.2h3.17v3.17h-3.17zM535.64 365.07h6.03v3.17h-6.03zM610.16 365.07h3.17v3.17h-3.17zM535.64 367.93h6.03v3.17h-6.03zM538.5 370.8h3.17v3.17h-3.17zM538.5 373.67h3.17v3.17h-3.17zM604.43 373.67h3.17v3.17h-3.17zM541.37 376.53h3.17v3.17h-3.17zM544.24 379.4h3.17v3.17h-3.17zM549.97 382.27h3.17v3.17h-3.17zM552.83 385.13h3.17v3.17h-3.17zM558.57 385.13h3.17v3.17h-3.17zM595.83 385.13h3.17v3.17h-3.17zM567.17 390.86h3.17v3.17h-3.17zM567.17 393.73h3.17v3.17h-3.17zM578.63 393.73h3.17v3.17h-3.17zM592.97 393.73h3.17v3.17h-3.17zM567.17 396.6h3.17v3.17h-3.17zM575.77 396.6h17.5v3.17h-17.5zM570.03 399.46h17.5v3.17h-17.5z"/><path fill="#20ad6c" d="M561.43 319.2h6.03v3.17h-6.03zM584.37 319.2h6.03v3.17h-6.03zM590.1 322.07h3.17v3.17h-3.17zM592.97 324.94h3.17v3.17h-3.17zM555.7 327.8h3.17v3.17h-3.17zM595.83 327.8h3.17v3.17h-3.17zM552.83 330.67h3.17v3.17h-3.17zM598.7 330.67h3.17v3.17h-3.17zM549.97 333.53h3.17v3.17h-3.17zM601.57 333.53h3.17v3.17h-3.17zM541.37 336.4h8.9v3.17h-8.9zM604.43 336.4h3.17v3.17h-3.17zM538.5 339.27h6.03v3.17h-6.03zM610.16 339.27h3.17v3.17h-3.17zM535.64 342.13h3.17v3.17h-3.17zM613.03 342.13h3.17v3.17h-3.17zM532.77 347.87h3.17v3.17h-3.17zM535.64 353.6h3.17v3.17h-3.17zM538.5 356.47h3.17v3.17h-3.17zM538.5 359.33h3.17v3.17h-3.17zM613.03 359.33h3.17v3.17h-3.17zM541.37 367.93h3.17v3.17h-3.17zM607.3 367.93h3.17v3.17h-3.17zM541.37 370.8h3.17v3.17h-3.17zM541.37 373.67h3.17v3.17h-3.17zM544.24 376.53h3.17v3.17h-3.17zM601.57 376.53h3.17v3.17h-3.17zM547.1 379.4h6.03v3.17h-6.03zM598.7 379.4h3.17v3.17h-3.17zM552.83 382.27h3.17v3.17h-3.17zM564.3 388h3.17v3.17h-3.17zM592.97 388h3.17v3.17h-3.17zM592.97 390.86h3.17v3.17h-3.17zM570.03 393.73h8.9v3.17h-8.9zM581.5 393.73h11.77v3.17h-11.77zM570.03 396.6h6.03v3.17h-6.03z"/><path fill="#20b05d" d="M567.17 319.2h6.03v3.17h-6.03zM581.5 319.2h3.17v3.17h-3.17zM561.43 322.07h3.17v3.17h-3.17zM558.57 324.94h3.17v3.17h-3.17zM544.24 339.27h3.17v3.17h-3.17zM607.3 339.27h3.17v3.17h-3.17zM538.5 342.13h6.03v3.17h-6.03zM610.16 342.13h3.17v3.17h-3.17zM535.64 345h3.17v3.17h-3.17zM613.03 345h3.17v3.17h-3.17zM613.03 347.87h3.17v3.17h-3.17zM535.64 350.73h3.17v3.17h-3.17zM613.03 350.73h3.17v3.17h-3.17zM538.5 353.6h3.17v3.17h-3.17zM613.03 353.6h3.17v3.17h-3.17zM613.03 356.47h3.17v3.17h-3.17zM541.37 362.2h3.17v3.17h-3.17zM610.16 362.2h3.17v3.17h-3.17zM541.37 365.07h3.17v3.17h-3.17zM604.43 370.8h3.17v3.17h-3.17zM544.24 373.67h3.17v3.17h-3.17zM547.1 376.53h3.17v3.17h-3.17zM555.7 382.27h3.17v3.17h-3.17zM595.83 382.27h3.17v3.17h-3.17zM561.43 385.13h3.17v3.17h-3.17zM592.97 385.13h3.17v3.17h-3.17zM570.03 390.86h23.23v3.17h-23.23z"/><path fill="#1db350" d="M572.9 319.2h8.9v3.17h-8.9zM587.23 322.07h3.17v3.17h-3.17zM552.83 333.53h3.17v3.17h-3.17zM598.7 333.53h3.17v3.17h-3.17zM549.97 336.4h3.17v3.17h-3.17zM601.57 336.4h3.17v3.17h-3.17zM547.1 339.27h3.17v3.17h-3.17zM544.24 342.13h3.17v3.17h-3.17zM538.5 345h3.17v3.17h-3.17zM610.16 345h3.17v3.17h-3.17zM535.64 347.87h6.03v3.17h-6.03zM538.5 350.73h3.17v3.17h-3.17zM541.37 359.33h3.17v3.17h-3.17zM544.24 370.8h3.17v3.17h-3.17zM547.1 373.67h3.17v3.17h-3.17zM601.57 373.67h3.17v3.17h-3.17zM549.97 376.53h3.17v3.17h-3.17zM552.83 379.4h3.17v3.17h-3.17zM558.57 382.27h3.17v3.17h-3.17zM567.17 388h3.17v3.17h-3.17zM590.1 388h3.17v3.17h-3.17z"/><path fill="#1bb543" d="M564.3 322.07h3.17v3.17h-3.17zM584.37 322.07h3.17v3.17h-3.17zM590.1 324.94h3.17v3.17h-3.17zM558.57 327.8h3.17v3.17h-3.17zM592.97 327.8h3.17v3.17h-3.17zM555.7 330.67h3.17v3.17h-3.17zM595.83 330.67h3.17v3.17h-3.17zM604.43 339.27h3.17v3.17h-3.17zM607.3 342.13h3.17v3.17h-3.17zM541.37 345h3.17v3.17h-3.17zM541.37 356.47h3.17v3.17h-3.17zM610.16 359.33h3.17v3.17h-3.17zM607.3 365.07h3.17v3.17h-3.17zM544.24 367.93h3.17v3.17h-3.17zM598.7 376.53h3.17v3.17h-3.17zM564.3 385.13h3.17v3.17h-3.17zM570.03 388h3.17v3.17h-3.17zM587.23 388h3.17v3.17h-3.17z"/><path fill="#19b735" d="M567.17 322.07h3.17v3.17h-3.17zM561.43 324.94h3.17v3.17h-3.17zM544.24 345h3.17v3.17h-3.17zM541.37 347.87h3.17v3.17h-3.17zM610.16 347.87h3.17v3.17h-3.17zM541.37 350.73h3.17v3.17h-3.17zM610.16 350.73h3.17v3.17h-3.17zM541.37 353.6h3.17v3.17h-3.17zM610.16 353.6h3.17v3.17h-3.17zM544.24 356.47h3.17v3.17h-3.17zM610.16 356.47h3.17v3.17h-3.17zM544.24 359.33h3.17v3.17h-3.17zM544.24 362.2h3.17v3.17h-3.17zM544.24 365.07h3.17v3.17h-3.17zM604.43 367.93h3.17v3.17h-3.17zM547.1 370.8h3.17v3.17h-3.17zM601.57 370.8h3.17v3.17h-3.17zM549.97 373.67h3.17v3.17h-3.17zM552.83 376.53h3.17v3.17h-3.17zM555.7 379.4h3.17v3.17h-3.17zM595.83 379.4h3.17v3.17h-3.17zM561.43 382.27h3.17v3.17h-3.17zM592.97 382.27h3.17v3.17h-3.17zM567.17 385.13h3.17v3.17h-3.17zM590.1 385.13h3.17v3.17h-3.17zM572.9 388h14.63v3.17h-14.63z"/><path fill="#17b92b" d="M570.03 322.07h3.17v3.17h-3.17zM581.5 322.07h3.17v3.17h-3.17zM587.23 324.94h3.17v3.17h-3.17zM592.97 330.67h3.17v3.17h-3.17zM555.7 333.53h3.17v3.17h-3.17zM595.83 333.53h3.17v3.17h-3.17zM552.83 336.4h3.17v3.17h-3.17zM598.7 336.4h3.17v3.17h-3.17zM549.97 339.27h3.17v3.17h-3.17zM601.57 339.27h3.17v3.17h-3.17zM547.1 342.13h3.17v3.17h-3.17zM604.43 342.13h3.17v3.17h-3.17zM607.3 345h3.17v3.17h-3.17zM544.24 353.6h3.17v3.17h-3.17zM547.1 359.33h3.17v3.17h-3.17zM547.1 362.2h3.17v3.17h-3.17zM607.3 362.2h3.17v3.17h-3.17zM547.1 365.07h3.17v3.17h-3.17zM604.43 365.07h3.17v3.17h-3.17zM547.1 367.93h3.17v3.17h-3.17zM598.7 373.67h3.17v3.17h-3.17zM558.57 379.4h3.17v3.17h-3.17zM564.3 382.27h3.17v3.17h-3.17zM570.03 385.13h3.17v3.17h-3.17z"/><path fill="#14bc22" d="M572.9 322.07h8.9v3.17h-8.9zM564.3 324.94h3.17v3.17h-3.17zM584.37 324.94h3.17v3.17h-3.17zM561.43 327.8h3.17v3.17h-3.17zM590.1 327.8h3.17v3.17h-3.17zM558.57 330.67h3.17v3.17h-3.17zM595.83 336.4h3.17v3.17h-3.17zM598.7 339.27h3.17v3.17h-3.17zM549.97 342.13h3.17v3.17h-3.17zM547.1 345h3.17v3.17h-3.17zM544.24 347.87h6.03v3.17h-6.03zM544.24 350.73h3.17v3.17h-3.17zM547.1 353.6h3.17v3.17h-3.17zM547.1 356.47h3.17v3.17h-3.17zM607.3 359.33h3.17v3.17h-3.17zM549.97 367.93h3.17v3.17h-3.17zM601.57 367.93h3.17v3.17h-3.17zM549.97 370.8h6.03v3.17h-6.03zM598.7 370.8h3.17v3.17h-3.17zM552.83 373.67h3.17v3.17h-3.17zM555.7 376.53h6.03v3.17h-6.03zM595.83 376.53h3.17v3.17h-3.17zM561.43 379.4h3.17v3.17h-3.17zM592.97 379.4h3.17v3.17h-3.17zM567.17 382.27h3.17v3.17h-3.17zM590.1 382.27h3.17v3.17h-3.17zM572.9 385.13h17.5v3.17h-17.5z"/><path fill="#12be19" d="M567.17 324.94h3.17v3.17h-3.17zM581.5 324.94h3.17v3.17h-3.17zM587.23 327.8h3.17v3.17h-3.17zM590.1 330.67h3.17v3.17h-3.17zM558.57 333.53h3.17v3.17h-3.17zM592.97 333.53h3.17v3.17h-3.17zM555.7 336.4h3.17v3.17h-3.17zM552.83 339.27h3.17v3.17h-3.17zM601.57 342.13h3.17v3.17h-3.17zM549.97 345h3.17v3.17h-3.17zM604.43 345h3.17v3.17h-3.17zM607.3 347.87h3.17v3.17h-3.17zM547.1 350.73h3.17v3.17h-3.17zM607.3 350.73h3.17v3.17h-3.17zM607.3 353.6h3.17v3.17h-3.17zM607.3 356.47h3.17v3.17h-3.17zM604.43 359.33h3.17v3.17h-3.17zM549.97 362.2h3.17v3.17h-3.17zM604.43 362.2h3.17v3.17h-3.17zM549.97 365.07h3.17v3.17h-3.17zM601.57 365.07h3.17v3.17h-3.17zM552.83 367.93h3.17v3.17h-3.17zM555.7 373.67h3.17v3.17h-3.17zM595.83 373.67h3.17v3.17h-3.17zM592.97 376.53h3.17v3.17h-3.17zM564.3 379.4h3.17v3.17h-3.17zM590.1 379.4h3.17v3.17h-3.17zM570.03 382.27h6.03v3.17h-6.03zM584.37 382.27h6.03v3.17h-6.03z"/><path fill="#10c010" d="M570.03 324.94h11.77v3.17h-11.77zM564.3 327.8h3.17v3.17h-3.17zM581.5 327.8h6.03v3.17h-6.03zM561.43 330.67h3.17v3.17h-3.17zM587.23 330.67h3.17v3.17h-3.17zM590.1 333.53h3.17v3.17h-3.17zM558.57 336.4h3.17v3.17h-3.17zM592.97 336.4h3.17v3.17h-3.17zM555.7 339.27h3.17v3.17h-3.17zM595.83 339.27h3.17v3.17h-3.17zM552.83 342.13h3.17v3.17h-3.17zM598.7 342.13h3.17v3.17h-3.17zM601.57 345h3.17v3.17h-3.17zM549.97 347.87h3.17v3.17h-3.17zM604.43 347.87h3.17v3.17h-3.17zM549.97 350.73h3.17v3.17h-3.17zM604.43 350.73h3.17v3.17h-3.17zM549.97 353.6h3.17v3.17h-3.17zM604.43 353.6h3.17v3.17h-3.17zM549.97 356.47h3.17v3.17h-3.17zM604.43 356.47h3.17v3.17h-3.17zM549.97 359.33h3.17v3.17h-3.17zM601.57 362.2h3.17v3.17h-3.17zM552.83 365.07h3.17v3.17h-3.17zM598.7 367.93h3.17v3.17h-3.17zM555.7 370.8h3.17v3.17h-3.17zM595.83 370.8h3.17v3.17h-3.17zM558.57 373.67h3.17v3.17h-3.17zM592.97 373.67h3.17v3.17h-3.17zM561.43 376.53h3.17v3.17h-3.17zM590.1 376.53h3.17v3.17h-3.17zM567.17 379.4h3.17v3.17h-3.17zM587.23 379.4h3.17v3.17h-3.17zM575.77 382.27h8.9v3.17h-8.9z"/><path fill="#2ac30d" d="M567.17 327.8h14.63v3.17h-14.63zM564.3 330.67h6.03v3.17h-6.03zM584.37 330.67h3.17v3.17h-3.17zM561.43 333.53h3.17v3.17h-3.17zM587.23 333.53h3.17v3.17h-3.17zM590.1 336.4h3.17v3.17h-3.17zM592.97 339.27h3.17v3.17h-3.17zM595.83 342.13h3.17v3.17h-3.17zM552.83 345h3.17v3.17h-3.17zM598.7 345h3.17v3.17h-3.17zM601.57 347.87h3.17v3.17h-3.17zM601.57 350.73h3.17v3.17h-3.17zM601.57 353.6h3.17v3.17h-3.17zM601.57 356.47h3.17v3.17h-3.17zM601.57 359.33h3.17v3.17h-3.17zM598.7 365.07h3.17v3.17h-3.17zM555.7 367.93h3.17v3.17h-3.17zM564.3 376.53h3.17v3.17h-3.17zM587.23 376.53h3.17v3.17h-3.17zM570.03 379.4h3.17v3.17h-3.17zM581.5 379.4h6.03v3.17h-6.03z"/><path fill="#44c709" d="M570.03 330.67h6.03v3.17h-6.03zM578.63 330.67h6.03v3.17h-6.03zM564.3 333.53h3.17v3.17h-3.17zM561.43 336.4h3.17v3.17h-3.17zM558.57 339.27h3.17v3.17h-3.17zM555.7 342.13h3.17v3.17h-3.17zM552.83 347.87h3.17v3.17h-3.17zM598.7 347.87h3.17v3.17h-3.17zM552.83 362.2h3.17v3.17h-3.17zM598.7 362.2h3.17v3.17h-3.17zM595.83 367.93h3.17v3.17h-3.17zM558.57 370.8h3.17v3.17h-3.17zM592.97 370.8h3.17v3.17h-3.17zM561.43 373.67h3.17v3.17h-3.17zM590.1 373.67h3.17v3.17h-3.17zM572.9 379.4h8.9v3.17h-8.9z"/><path fill="#5dc907" d="M575.77 330.67h3.17v3.17h-3.17zM567.17 333.53h3.17v3.17h-3.17zM584.37 333.53h3.17v3.17h-3.17zM587.23 336.4h3.17v3.17h-3.17zM592.97 342.13h3.17v3.17h-3.17zM555.7 345h3.17v3.17h-3.17zM595.83 345h3.17v3.17h-3.17zM552.83 350.73h3.17v3.17h-3.17zM598.7 350.73h3.17v3.17h-3.17zM552.83 353.6h3.17v3.17h-3.17zM598.7 353.6h3.17v3.17h-3.17zM598.7 356.47h3.17v3.17h-3.17zM552.83 359.33h3.17v3.17h-3.17zM598.7 359.33h3.17v3.17h-3.17zM595.83 365.07h3.17v3.17h-3.17zM567.17 376.53h3.17v3.17h-3.17zM584.37 376.53h3.17v3.17h-3.17z"/><path fill="#76ca04" d="M570.03 333.53h3.17v3.17h-3.17zM581.5 333.53h3.17v3.17h-3.17zM564.3 336.4h3.17v3.17h-3.17zM590.1 339.27h3.17v3.17h-3.17zM595.83 347.87h3.17v3.17h-3.17zM552.83 356.47h3.17v3.17h-3.17zM555.7 365.07h3.17v3.17h-3.17zM592.97 367.93h3.17v3.17h-3.17zM587.23 373.67h3.17v3.17h-3.17z"/><path fill="#8ecb01" d="M572.9 333.53h8.9v3.17h-8.9zM584.37 336.4h3.17v3.17h-3.17zM561.43 339.27h3.17v3.17h-3.17zM558.57 342.13h3.17v3.17h-3.17zM555.7 347.87h3.17v3.17h-3.17zM595.83 350.73h3.17v3.17h-3.17zM595.83 362.2h3.17v3.17h-3.17zM558.57 367.93h3.17v3.17h-3.17zM590.1 370.8h3.17v3.17h-3.17zM564.3 373.67h3.17v3.17h-3.17zM570.03 376.53h3.17v3.17h-3.17zM578.63 376.53h6.03v3.17h-6.03z"/><path fill="#a3cd00" d="M567.17 336.4h3.17v3.17h-3.17zM587.23 339.27h3.17v3.17h-3.17zM590.1 342.13h3.17v3.17h-3.17zM592.97 345h3.17v3.17h-3.17zM595.83 353.6h3.17v3.17h-3.17zM595.83 356.47h3.17v3.17h-3.17zM595.83 359.33h3.17v3.17h-3.17zM555.7 362.2h3.17v3.17h-3.17zM592.97 365.07h3.17v3.17h-3.17zM561.43 370.8h3.17v3.17h-3.17zM584.37 373.67h3.17v3.17h-3.17zM572.9 376.53h6.03v3.17h-6.03z"/><path fill="#b6ce00" d="M570.03 336.4h3.17v3.17h-3.17zM578.63 336.4h6.03v3.17h-6.03zM564.3 339.27h3.17v3.17h-3.17zM561.43 342.13h3.17v3.17h-3.17zM558.57 345h3.17v3.17h-3.17zM592.97 347.87h3.17v3.17h-3.17zM555.7 350.73h3.17v3.17h-3.17zM555.7 353.6h3.17v3.17h-3.17zM555.7 356.47h3.17v3.17h-3.17zM555.7 359.33h3.17v3.17h-3.17zM590.1 367.93h3.17v3.17h-3.17zM587.23 370.8h3.17v3.17h-3.17zM567.17 373.67h3.17v3.17h-3.17z"/><path fill="#c9cf00" d="M572.9 336.4h6.03v3.17h-6.03zM584.37 339.27h3.17v3.17h-3.17zM590.1 345h3.17v3.17h-3.17zM592.97 350.73h3.17v3.17h-3.17zM592.97 362.2h3.17v3.17h-3.17zM558.57 365.07h3.17v3.17h-3.17zM564.3 370.8h3.17v3.17h-3.17zM570.03 373.67h3.17v3.17h-3.17zM578.63 373.67h6.03v3.17h-6.03z"/><path fill="#d9cc01" d="M567.17 339.27h3.17v3.17h-3.17zM587.23 342.13h3.17v3.17h-3.17zM558.57 347.87h3.17v3.17h-3.17zM592.97 353.6h3.17v3.17h-3.17zM592.97 356.47h3.17v3.17h-3.17zM592.97 359.33h3.17v3.17h-3.17zM558.57 362.2h3.17v3.17h-3.17zM590.1 365.07h3.17v3.17h-3.17zM561.43 367.93h3.17v3.17h-3.17zM584.37 370.8h3.17v3.17h-3.17zM572.9 373.67h6.03v3.17h-6.03z"/><path fill="#dcbb07" d="M570.03 339.27h3.17v3.17h-3.17zM581.5 339.27h3.17v3.17h-3.17zM564.3 342.13h3.17v3.17h-3.17zM561.43 345h3.17v3.17h-3.17zM590.1 347.87h3.17v3.17h-3.17zM558.57 350.73h3.17v3.17h-3.17zM587.23 367.93h3.17v3.17h-3.17zM567.17 370.8h3.17v3.17h-3.17z"/><path fill="#dea90d" d="M572.9 339.27h8.9v3.17h-8.9zM584.37 342.13h3.17v3.17h-3.17zM587.23 345h3.17v3.17h-3.17zM558.57 353.6h3.17v3.17h-3.17zM558.57 356.47h3.17v3.17h-3.17zM558.57 359.33h3.17v3.17h-3.17zM590.1 362.2h3.17v3.17h-3.17zM561.43 365.07h3.17v3.17h-3.17zM564.3 367.93h3.17v3.17h-3.17zM581.5 370.8h3.17v3.17h-3.17z"/><path fill="#e09913" d="M567.17 342.13h3.17v3.17h-3.17zM561.43 347.87h3.17v3.17h-3.17zM590.1 350.73h3.17v3.17h-3.17zM570.03 370.8h3.17v3.17h-3.17z"/><path fill="#e07e1e" d="M570.03 342.13h3.17v3.17h-3.17zM578.63 342.13h3.17v3.17h-3.17zM584.37 345h3.17v3.17h-3.17zM587.23 347.87h3.17v3.17h-3.17zM561.43 350.73h3.17v3.17h-3.17zM561.43 353.6h3.17v3.17h-3.17zM561.43 359.33h3.17v3.17h-3.17zM564.3 365.07h3.17v3.17h-3.17zM567.17 367.93h3.17v3.17h-3.17z"/><path fill="#e17123" d="M572.9 342.13h6.03v3.17h-6.03zM567.17 345h3.17v3.17h-3.17zM564.3 347.87h3.17v3.17h-3.17zM561.43 356.47h3.17v3.17h-3.17z"/><path fill="#e08b18" d="M581.5 342.13h3.17v3.17h-3.17zM564.3 345h3.17v3.17h-3.17zM590.1 353.6h3.17v3.17h-3.17zM590.1 356.47h3.17v3.17h-3.17zM590.1 359.33h3.17v3.17h-3.17zM561.43 362.2h3.17v3.17h-3.17zM587.23 365.07h3.17v3.17h-3.17zM584.37 367.93h3.17v3.17h-3.17zM572.9 370.8h8.9v3.17h-8.9z"/><path fill="#e55234" d="M570.03 345h3.17v3.17h-3.17zM564.3 350.73h3.17v3.17h-3.17zM567.17 365.07h3.17v3.17h-3.17zM584.37 365.07h3.17v3.17h-3.17z"/><path fill="#e64a3a" d="M572.9 345h3.17v3.17h-3.17zM578.63 345h3.17v3.17h-3.17zM567.17 347.87h3.17v3.17h-3.17zM584.37 347.87h3.17v3.17h-3.17zM564.3 353.6h3.17v3.17h-3.17zM587.23 353.6h3.17v3.17h-3.17zM564.3 359.33h3.17v3.17h-3.17zM587.23 359.33h3.17v3.17h-3.17zM572.9 367.93h3.17v3.17h-3.17zM578.63 367.93h3.17v3.17h-3.17z"/><path fill="#e8413f" d="M575.77 345h3.17v3.17h-3.17zM564.3 356.47h3.17v3.17h-3.17zM587.23 356.47h3.17v3.17h-3.17zM575.77 367.93h3.17v3.17h-3.17z"/><path fill="#e45b2e" d="M581.5 345h3.17v3.17h-3.17zM587.23 350.73h3.17v3.17h-3.17zM564.3 362.2h3.17v3.17h-3.17zM587.23 362.2h3.17v3.17h-3.17zM570.03 367.93h3.17v3.17h-3.17zM581.5 367.93h3.17v3.17h-3.17z"/><path fill="#ec6087" d="M570.03 347.87h3.17v3.17h-3.17zM581.5 347.87h3.17v3.17h-3.17zM567.17 350.73h3.17v3.17h-3.17zM584.37 350.73h3.17v3.17h-3.17zM567.17 362.2h3.17v3.17h-3.17zM584.37 362.2h3.17v3.17h-3.17zM570.03 365.07h3.17v3.17h-3.17zM581.5 365.07h3.17v3.17h-3.17z"/><path fill="#f291cc" d="M572.9 347.87h3.17v3.17h-3.17zM578.63 347.87h3.17v3.17h-3.17zM567.17 353.6h3.17v3.17h-3.17zM584.37 353.6h3.17v3.17h-3.17zM567.17 359.33h3.17v3.17h-3.17zM584.37 359.33h3.17v3.17h-3.17zM572.9 365.07h3.17v3.17h-3.17zM578.63 365.07h3.17v3.17h-3.17z"/><path fill="#f49ddc" d="M575.77 347.87h3.17v3.17h-3.17zM570.03 350.73h3.17v3.17h-3.17zM581.5 350.73h3.17v3.17h-3.17zM567.17 356.47h3.17v3.17h-3.17zM584.37 356.47h3.17v3.17h-3.17zM570.03 362.2h3.17v3.17h-3.17zM581.5 362.2h3.17v3.17h-3.17zM575.77 365.07h3.17v3.17h-3.17z"/><path fill="#f7b6f5" d="M572.9 350.73h3.17v3.17h-3.17zM578.63 350.73h3.17v3.17h-3.17zM570.03 353.6h3.17v3.17h-3.17zM581.5 353.6h3.17v3.17h-3.17zM570.03 359.33h3.17v3.17h-3.17zM581.5 359.33h3.17v3.17h-3.17zM572.9 362.2h3.17v3.17h-3.17zM578.63 362.2h3.17v3.17h-3.17z"/><path fill="#f6c2f6" d="M575.77 350.73h3.17v3.17h-3.17zM570.03 356.47h3.17v3.17h-3.17zM581.5 356.47h3.17v3.17h-3.17zM575.77 362.2h3.17v3.17h-3.17z"/><path fill="#f8e6fb" d="M572.9 353.6h3.17v3.17h-3.17zM578.63 353.6h3.17v3.17h-3.17zM572.9 359.33h3.17v3.17h-3.17zM578.63 359.33h3.17v3.17h-3.17z"/><path fill="#fcf3fd" d="M575.77 353.6h3.17v3.17h-3.17zM572.9 356.47h3.17v3.17h-3.17zM578.63 356.47h3.17v3.17h-3.17zM575.77 359.33h3.17v3.17h-3.17z"/><path fill="#ffffff" d="M575.77 356.47h3.17v3.17h-3.17z"/></svg>
<div style="left:354.25px;top:850px;width:742.25px;height:20px;border:1px solid #fff;border-right:0;background:linear-gradient(90deg,#000000 0.0%,#000000 9.8%,#2e2c2e 10.4%,#48434e 13.7%,#524e74 18.0%,#4a5a88 22.0%,#3c709a 26.0%,#3088a0 29.5%,#28a09a 33.0%,#20a880 37.0%,#20b060 40.0%,#18b830 45.0%,#10c010 50.0%,#50c808 53.4%,#98cc00 57.5%,#d8d000 62.2%,#e0a010 66.0%,#e07820 70.0%,#e45830 74.0%,#e84040 78.0%,#ec6088 82.0%,#f088c0 86.5%,#f8b0f4 91.0%,#f4d8f8 95.6%,#ffffff 100.0%)"></div>
<div style="left:427.5px;top:870px;width:1.25px;height:3.25px;background:#e6e6e6"></div><div class="cl" style="left:398.12px;top:880.5px">0.06</div>
<div style="left:501.66px;top:870px;width:1.25px;height:3.25px;background:#e6e6e6"></div><div class="cl" style="left:472.29px;top:880.5px">0.18</div>
<div style="left:575.82px;top:870px;width:1.25px;height:3.25px;background:#e6e6e6"></div><div class="cl" style="left:546.45px;top:880.5px">0.42</div>
<div style="left:649.99px;top:870px;width:1.25px;height:3.25px;background:#e6e6e6"></div><div class="cl" style="left:620.61px;top:880.5px">0.9</div>
<div style="left:724.15px;top:870px;width:1.25px;height:3.25px;background:#e6e6e6"></div><div class="cl" style="left:694.77px;top:880.5px">1.9</div>
<div style="left:798.31px;top:870px;width:1.25px;height:3.25px;background:#e6e6e6"></div><div class="cl" style="left:768.94px;top:880.5px">3.8</div>
<div style="left:872.48px;top:870px;width:1.25px;height:3.25px;background:#e6e6e6"></div><div class="cl" style="left:843.10px;top:880.5px">7.6</div>
<div style="left:946.64px;top:870px;width:1.25px;height:3.25px;background:#e6e6e6"></div><div class="cl" style="left:917.26px;top:880.5px">15</div>
<div style="left:1020.8px;top:870px;width:1.25px;height:3.25px;background:#e6e6e6"></div><div class="cl" style="left:991.42px;top:880.5px">31</div>
<svg style="left:1081.12px;top:893.5px" width="15.38" height="14.25" viewBox="0 0 15 14"><rect width="15" height="14" fill="#fff"/><path d="M14.5 3.5 4.5 13.5M14.5 7 8 13.5M14.5 10.5 11.5 13.5" stroke="#8e8e8e" stroke-width="1" fill="none"/></svg>
</div></body></html>
